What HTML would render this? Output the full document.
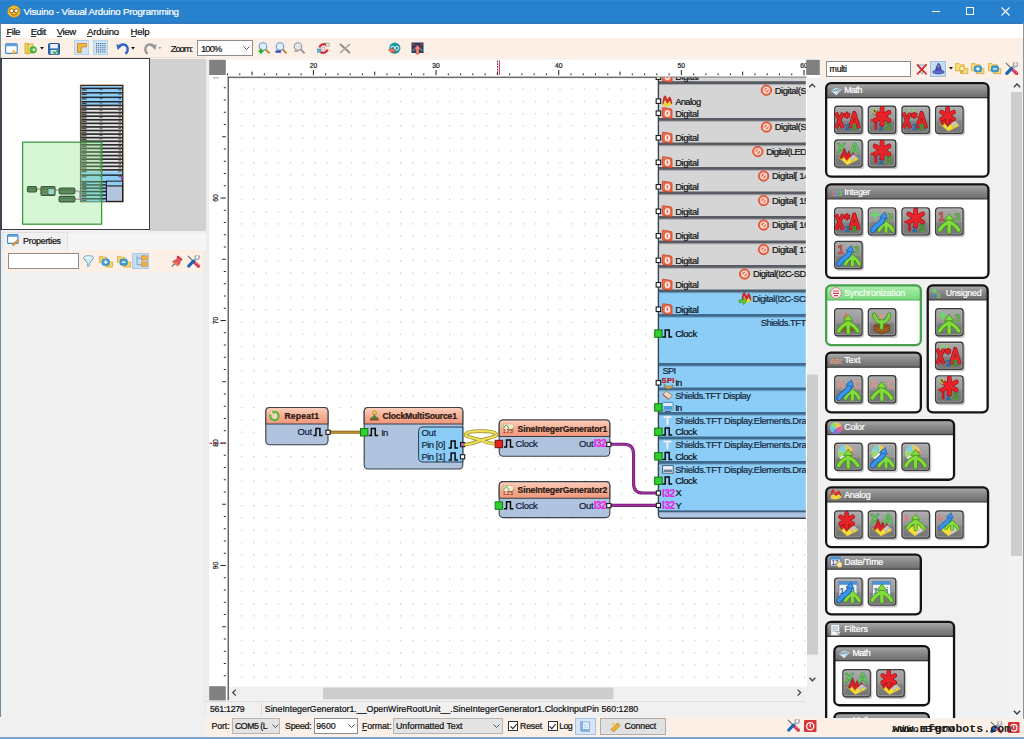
<!DOCTYPE html><html><head><meta charset="utf-8"><title>Visuino</title><style>
html,body{margin:0;padding:0}body{width:1024px;height:739px;position:relative;overflow:hidden;background:#f0f0f0;font-family:"Liberation Sans",sans-serif}
.t{position:absolute;white-space:nowrap;-webkit-text-stroke:0.22px}
</style></head><body>
<div style="position:absolute;left:0.00px;top:0.00px;width:1024.00px;height:24.00px;background:linear-gradient(#2f89d4 0,#2881cd 1.5px,#2881cd 21.5px,#2a74ba 23px,#3a80c4 24px)"></div>
<svg style="position:absolute;left:6.50px;top:5.00px" width="14.00" height="13.00" viewBox="0 0 14 13"><ellipse cx="7" cy="6.5" rx="6.3" ry="5.8" fill="#f6c62a" stroke="#c98d10" stroke-width="0.8"/><circle cx="4.6" cy="5.8" r="2" fill="#fff" stroke="#7a4a10" stroke-width="0.9"/><circle cx="9.4" cy="5.8" r="2" fill="#fff" stroke="#7a4a10" stroke-width="0.9"/><path d="M4 9.3 Q7 11 10 9.3" stroke="#a0401a" stroke-width="0.9" fill="none"/></svg>
<div class="t" style="left:23.40px;top:6.41px;font-size:9.60px;line-height:11.52px;letter-spacing:-0.162px;color:#fff;">Visuino - Visual Arduino Programming</div>
<div style="position:absolute;left:932.00px;top:11.30px;width:8.00px;height:1.00px;background:#fff"></div>
<div style="position:absolute;left:966.00px;top:7.00px;width:7.50px;height:7.50px;border:1px solid #fff;box-sizing:border-box"></div>
<svg style="position:absolute;left:1001.00px;top:6.50px" width="9.00" height="9.00" viewBox="0 0 9 9"><path d="M0.5 0.5 L8.5 8.5 M8.5 0.5 L0.5 8.5" stroke="#fff" stroke-width="1.1"/></svg>
<div style="position:absolute;left:0.00px;top:24.00px;width:1024.00px;height:14.00px;background:#fff"></div>
<div class="t" style="left:6.40px;top:25.71px;font-size:9.60px;line-height:11.52px;letter-spacing:-0.492px;color:#111;">File</div>
<div style="position:absolute;left:6.40px;top:36.20px;width:4.69px;height:0.80px;background:#333"></div>
<div class="t" style="left:30.70px;top:25.71px;font-size:9.60px;line-height:11.52px;letter-spacing:-0.336px;color:#111;">Edit</div>
<div style="position:absolute;left:30.70px;top:36.20px;width:5.12px;height:0.80px;background:#333"></div>
<div class="t" style="left:56.80px;top:25.71px;font-size:9.60px;line-height:11.52px;letter-spacing:-0.409px;color:#111;">View</div>
<div style="position:absolute;left:56.80px;top:36.20px;width:5.12px;height:0.80px;background:#333"></div>
<div class="t" style="left:86.90px;top:25.71px;font-size:9.60px;line-height:11.52px;letter-spacing:-0.127px;color:#111;">Arduino</div>
<div style="position:absolute;left:86.90px;top:36.20px;width:5.12px;height:0.80px;background:#333"></div>
<div class="t" style="left:130.50px;top:25.71px;font-size:9.60px;line-height:11.52px;letter-spacing:-0.211px;color:#111;">Help</div>
<div style="position:absolute;left:130.50px;top:36.20px;width:5.55px;height:0.80px;background:#333"></div>
<div style="position:absolute;left:0.00px;top:38.00px;width:1024.00px;height:40.50px;background:#fbefe6"></div>
<div style="position:absolute;left:0.00px;top:57.30px;width:206.00px;height:1.20px;background:#e9e2dc"></div>
<div style="position:absolute;left:0.00px;top:58.50px;width:206.00px;height:20.00px;background:#f0f0f0"></div>
<div style="position:absolute;left:206.00px;top:59.40px;width:614.00px;height:20.00px;background:#f0f0f0"></div>
<svg style="position:absolute;left:5.00px;top:42.60px" width="13.00" height="12.00" viewBox="0 0 13 12"><rect x="0.6" y="0.8" width="11.6" height="9.6" rx="1" fill="#fff" stroke="#3f86c6" stroke-width="1.1"/><rect x="0.6" y="0.8" width="11.6" height="2.4" fill="#5aa3df"/><path d="M8 7 l3 3 l-3 1z" fill="#f1c24c" stroke="#d19b1f" stroke-width="0.6"/></svg>
<svg style="position:absolute;left:24.00px;top:42.20px" width="14.00" height="13.00" viewBox="0 0 14 13"><path d="M1 1.5 h4 l1 1.5 v8.5 h-5z" fill="#f3d15a" stroke="#c9a227" stroke-width="0.8"/><path d="M4 3 l5 -1.5 v9 l-5 1.5z" fill="#f6dc7a" stroke="#c9a227" stroke-width="0.7"/><circle cx="9.2" cy="7.8" r="3.6" fill="#3fae3a"/><path d="M7.4 7.8 h3.2 M9.4 6.2 l1.6 1.6 l-1.6 1.6" stroke="#d8f6c8" stroke-width="1.1" fill="none"/></svg>
<svg style="position:absolute;left:39.50px;top:47.00px" width="4.00" height="3.00" viewBox="0 0 4 3"><path d="M0 0 h4 l-2 2.6z" fill="#111"/></svg>
<svg style="position:absolute;left:47.50px;top:42.60px" width="12.00" height="12.00" viewBox="0 0 12 12"><rect x="0.5" y="0.5" width="11" height="11" rx="1" fill="#2f6fb6" stroke="#1f4f8c" stroke-width="0.9"/><rect x="2.2" y="1" width="7.6" height="4.4" fill="#e9f1fb"/><rect x="2.6" y="7" width="6.8" height="4.2" fill="#d6e4f3"/><path d="M5 8.6 l1.8 1.8 l3.6 -3.8" stroke="#35b43a" stroke-width="1.5" fill="none"/></svg>
<div style="position:absolute;left:73.70px;top:39.80px;width:15.60px;height:15.60px;background:#cfe4f7;border:1px solid #b2d2ee;box-sizing:border-box"></div>
<svg style="position:absolute;left:76.00px;top:42.20px" width="12.00" height="12.00" viewBox="0 0 12 12"><path d="M1.5 1.5 h9 v3.4 h-5.4 v5.6 h-3.6z" fill="#f3b64b" stroke="#cf8a1c" stroke-width="0.9"/></svg>
<div style="position:absolute;left:92.70px;top:39.80px;width:15.80px;height:15.60px;background:#cfe4f7;border:1px solid #b2d2ee;box-sizing:border-box"></div>
<svg style="position:absolute;left:95.20px;top:42.20px" width="11.00" height="11.00" viewBox="0 0 11 11"><rect x="1.0" y="1.0" width="1.1" height="1.1" fill="#3c5a8a"/><rect x="1.0" y="3.1" width="1.1" height="1.1" fill="#3c5a8a"/><rect x="1.0" y="5.2" width="1.1" height="1.1" fill="#3c5a8a"/><rect x="1.0" y="7.3" width="1.1" height="1.1" fill="#3c5a8a"/><rect x="1.0" y="9.4" width="1.1" height="1.1" fill="#3c5a8a"/><rect x="3.1" y="1.0" width="1.1" height="1.1" fill="#3c5a8a"/><rect x="3.1" y="3.1" width="1.1" height="1.1" fill="#3c5a8a"/><rect x="3.1" y="5.2" width="1.1" height="1.1" fill="#3c5a8a"/><rect x="3.1" y="7.3" width="1.1" height="1.1" fill="#3c5a8a"/><rect x="3.1" y="9.4" width="1.1" height="1.1" fill="#3c5a8a"/><rect x="5.2" y="1.0" width="1.1" height="1.1" fill="#3c5a8a"/><rect x="5.2" y="3.1" width="1.1" height="1.1" fill="#3c5a8a"/><rect x="5.2" y="5.2" width="1.1" height="1.1" fill="#3c5a8a"/><rect x="5.2" y="7.3" width="1.1" height="1.1" fill="#3c5a8a"/><rect x="5.2" y="9.4" width="1.1" height="1.1" fill="#3c5a8a"/><rect x="7.3" y="1.0" width="1.1" height="1.1" fill="#3c5a8a"/><rect x="7.3" y="3.1" width="1.1" height="1.1" fill="#3c5a8a"/><rect x="7.3" y="5.2" width="1.1" height="1.1" fill="#3c5a8a"/><rect x="7.3" y="7.3" width="1.1" height="1.1" fill="#3c5a8a"/><rect x="7.3" y="9.4" width="1.1" height="1.1" fill="#3c5a8a"/><rect x="9.4" y="1.0" width="1.1" height="1.1" fill="#3c5a8a"/><rect x="9.4" y="3.1" width="1.1" height="1.1" fill="#3c5a8a"/><rect x="9.4" y="5.2" width="1.1" height="1.1" fill="#3c5a8a"/><rect x="9.4" y="7.3" width="1.1" height="1.1" fill="#3c5a8a"/><rect x="9.4" y="9.4" width="1.1" height="1.1" fill="#3c5a8a"/></svg>
<svg style="position:absolute;left:116.00px;top:42.20px" width="14.00" height="13.00" viewBox="0 0 14 13"><path d="M2.2 5.8 C4 1.5 10.5 1.2 11.6 6.2 C12.1 8.6 11 10.6 9.3 11.8" stroke="#2f66c8" stroke-width="2.3" fill="none"/><path d="M0.3 2.3 l5.6 1.6 l-4.2 4.1z" fill="#2f66c8"/></svg>
<svg style="position:absolute;left:131.20px;top:47.00px" width="4.00" height="3.00" viewBox="0 0 4 3"><path d="M0 0 h4 l-2 2.6z" fill="#111"/></svg>
<svg style="position:absolute;left:142.50px;top:42.20px" width="14.00" height="13.00" viewBox="0 0 14 13"><path d="M11.8 5.8 C10 1.5 3.5 1.2 2.4 6.2 C1.9 8.6 3 10.6 4.7 11.8" stroke="#9a9a9a" stroke-width="2.3" fill="none"/><path d="M13.7 2.3 l-5.6 1.6 l4.2 4.1z" fill="#9a9a9a"/></svg>
<svg style="position:absolute;left:157.70px;top:47.30px" width="4.00" height="3.00" viewBox="0 0 4 3"><path d="M0 0 h3.6 l-1.8 2.3z" fill="#a8a8a8"/></svg>
<div class="t" style="left:170.80px;top:43.13px;font-size:9.40px;line-height:11.28px;letter-spacing:-1.087px;color:#111;">Zoom:</div>
<div style="position:absolute;left:197.30px;top:40.00px;width:55.30px;height:16.00px;background:#fff;border:1px solid #8c8c8c;box-sizing:border-box"></div>
<div class="t" style="left:201.00px;top:43.33px;font-size:9.40px;line-height:11.28px;letter-spacing:-0.885px;color:#111;">100%</div>
<svg style="position:absolute;left:243.00px;top:46.00px" width="7.00" height="4.00" viewBox="0 0 7 4"><path d="M0.5 0.5 l3 3 l3 -3" stroke="#444" stroke-width="0.9" fill="none"/></svg>
<svg style="position:absolute;left:257.80px;top:42.20px" width="13.00" height="13.00" viewBox="0 0 13 13"><circle cx="5" cy="4.6" r="3.8" fill="#dff0ff" stroke="#6a9ccc" stroke-width="1.1"/><path d="M7.6 7.4 l4 4" stroke="#b68a3a" stroke-width="2"/><path d="M0.5 9.2 h5 M3 6.7 v5" stroke="#2fae2f" stroke-width="2"/></svg>
<svg style="position:absolute;left:274.80px;top:42.20px" width="13.00" height="13.00" viewBox="0 0 13 13"><circle cx="5" cy="4.6" r="3.8" fill="#dff0ff" stroke="#6a9ccc" stroke-width="1.1"/><path d="M7.6 7.4 l4 4" stroke="#b68a3a" stroke-width="2"/><path d="M0.5 9.6 h5.4" stroke="#2a3fb8" stroke-width="2.2"/></svg>
<svg style="position:absolute;left:292.60px;top:42.20px" width="13.00" height="13.00" viewBox="0 0 13 13"><circle cx="5" cy="4.6" r="3.8" fill="#e4e4e4" stroke="#999" stroke-width="1.1"/><path d="M7.6 7.4 l4 4" stroke="#999" stroke-width="2"/><path d="M0.8 10 l2.4 -2.8 l2.4 2.8z" fill="#aaa"/></svg>
<svg style="position:absolute;left:317.00px;top:42.20px" width="13.00" height="13.00" viewBox="0 0 13 13"><path d="M2.5 5.5 C3 2.5 7 1.2 9.5 3.2" stroke="#d2283c" stroke-width="2.2" fill="none"/><path d="M10.5 7.5 C10 10.5 6 11.8 3.5 9.8" stroke="#d2283c" stroke-width="2.2" fill="none"/><rect x="0.6" y="7" width="3.2" height="3.2" fill="#6ab6dc" stroke="#3d86ac" stroke-width="0.6"/><rect x="9" y="1" width="3.2" height="3.2" fill="#d8e8d0" stroke="#8aa080" stroke-width="0.6"/><circle cx="6.5" cy="6.5" r="1.5" fill="#fff" stroke="#c8384a" stroke-width="0.5"/></svg>
<svg style="position:absolute;left:339.00px;top:43.20px" width="12.00" height="11.00" viewBox="0 0 12 11"><path d="M1 1 L11 10" stroke="#8e8e8e" stroke-width="2"/><path d="M11 1 L1 10" stroke="#a5a5a5" stroke-width="1.6"/></svg>
<svg style="position:absolute;left:388.00px;top:42.20px" width="13.00" height="13.00" viewBox="0 0 13 13"><circle cx="6.8" cy="6.2" r="5.6" fill="#1e98a4"/><circle cx="4.8" cy="6.2" r="1.9" fill="none" stroke="#fff" stroke-width="0.9"/><circle cx="8.8" cy="6.2" r="1.9" fill="none" stroke="#fff" stroke-width="0.9"/><path d="M0.4 8 l3.6 -1.6 v1 h2.8 v2.6 h-2.8 v1z" fill="#ef7a6a" stroke="#c23b2c" stroke-width="0.6"/></svg>
<svg style="position:absolute;left:410.70px;top:42.20px" width="13.00" height="13.00" viewBox="0 0 13 13"><rect x="0.5" y="0.5" width="12" height="10.5" fill="#26405e"/><rect x="1.6" y="1.6" width="2" height="2" fill="#c33"/><rect x="9.4" y="1.6" width="2" height="2" fill="#c33"/><rect x="1.6" y="7" width="2" height="2" fill="#39a"/><rect x="9.4" y="7" width="2" height="2" fill="#39a"/><path d="M6.5 3 l3.6 4 h-2.1 v5 h-3 v-5 h-2.1z" fill="#f08a7e" stroke="#c8382c" stroke-width="0.6"/></svg>
<div style="position:absolute;left:0.00px;top:58.50px;width:209.00px;height:660.00px;background:#f0f0f0"></div>
<div style="position:absolute;left:150.00px;top:58.50px;width:55.50px;height:172.00px;background:#d1d1d1"></div>
<div style="position:absolute;left:1.00px;top:58.30px;width:148.80px;height:171.80px;background:#fff;border:1px solid #3c3c44;box-sizing:border-box"></div>
<svg style="position:absolute;left:0;top:0" width="160" height="232" viewBox="0 0 160 232"><rect x="80.6" y="85.2" width="42.4" height="116.4" fill="#e2e2e2" stroke="#b07a4a" stroke-width="1.4"/><rect x="81" y="85.6" width="41.6" height="116" fill="#e6e6e6" stroke="#1c1c1c" stroke-width="1"/><rect x="81.5" y="86" width="40.6" height="19.2" fill="#8fcdf7"/><rect x="81.5" y="171.5" width="40.6" height="30" fill="#8fcdf7"/><rect x="81.5" y="87.60" width="40.6" height="1.50" fill="#161616" opacity="0.9"/><rect x="82" y="89.40" width="4.6" height="1.2" fill="#111" opacity="0.75"/><rect x="99.5" y="89.10" width="3" height="1" fill="#222" opacity="0.6"/><rect x="118.4" y="89.30" width="2.6" height="1.1" fill="#222" opacity="0.6"/><rect x="81.5" y="92.07" width="40.6" height="1.50" fill="#161616" opacity="0.9"/><rect x="82" y="93.87" width="4.6" height="1.2" fill="#111" opacity="0.75"/><rect x="99.5" y="93.57" width="3" height="1" fill="#222" opacity="0.6"/><rect x="118.4" y="93.77" width="2.6" height="1.1" fill="#222" opacity="0.6"/><rect x="81.5" y="96.54" width="40.6" height="1.50" fill="#161616" opacity="0.9"/><rect x="82" y="98.34" width="4.6" height="1.2" fill="#111" opacity="0.75"/><rect x="99.5" y="98.04" width="3" height="1" fill="#222" opacity="0.6"/><rect x="118.4" y="98.24" width="2.6" height="1.1" fill="#222" opacity="0.6"/><rect x="81.5" y="101.01" width="40.6" height="1.50" fill="#161616" opacity="0.9"/><rect x="82" y="102.81" width="4.6" height="1.2" fill="#111" opacity="0.75"/><rect x="99.5" y="102.51" width="3" height="1" fill="#222" opacity="0.6"/><rect x="118.4" y="102.71" width="2.6" height="1.1" fill="#222" opacity="0.6"/><rect x="81.5" y="104.60" width="40.6" height="1.70" fill="#161616" opacity="0.9"/><rect x="82" y="106.60" width="4.6" height="1.2" fill="#111" opacity="0.75"/><rect x="99.5" y="106.30" width="3" height="1" fill="#222" opacity="0.6"/><rect x="118.4" y="106.50" width="2.6" height="1.1" fill="#222" opacity="0.6"/><rect x="81.5" y="108.18" width="40.6" height="1.70" fill="#161616" opacity="0.9"/><rect x="82" y="110.18" width="4.6" height="1.2" fill="#111" opacity="0.75"/><rect x="99.5" y="109.88" width="3" height="1" fill="#222" opacity="0.6"/><rect x="118.4" y="110.08" width="2.6" height="1.1" fill="#222" opacity="0.6"/><rect x="81.5" y="111.76" width="40.6" height="1.70" fill="#161616" opacity="0.9"/><rect x="82" y="113.76" width="4.6" height="1.2" fill="#111" opacity="0.75"/><rect x="99.5" y="113.46" width="3" height="1" fill="#222" opacity="0.6"/><rect x="118.4" y="113.66" width="2.6" height="1.1" fill="#222" opacity="0.6"/><rect x="81.5" y="115.34" width="40.6" height="1.70" fill="#161616" opacity="0.9"/><rect x="82" y="117.34" width="4.6" height="1.2" fill="#111" opacity="0.75"/><rect x="99.5" y="117.04" width="3" height="1" fill="#222" opacity="0.6"/><rect x="118.4" y="117.24" width="2.6" height="1.1" fill="#222" opacity="0.6"/><rect x="81.5" y="118.92" width="40.6" height="1.70" fill="#161616" opacity="0.9"/><rect x="82" y="120.92" width="4.6" height="1.2" fill="#111" opacity="0.75"/><rect x="99.5" y="120.62" width="3" height="1" fill="#222" opacity="0.6"/><rect x="118.4" y="120.82" width="2.6" height="1.1" fill="#222" opacity="0.6"/><rect x="81.5" y="122.50" width="40.6" height="1.70" fill="#161616" opacity="0.9"/><rect x="82" y="124.50" width="4.6" height="1.2" fill="#111" opacity="0.75"/><rect x="99.5" y="124.20" width="3" height="1" fill="#222" opacity="0.6"/><rect x="118.4" y="124.40" width="2.6" height="1.1" fill="#222" opacity="0.6"/><rect x="81.5" y="126.08" width="40.6" height="1.70" fill="#161616" opacity="0.9"/><rect x="82" y="128.08" width="4.6" height="1.2" fill="#111" opacity="0.75"/><rect x="99.5" y="127.78" width="3" height="1" fill="#222" opacity="0.6"/><rect x="118.4" y="127.98" width="2.6" height="1.1" fill="#222" opacity="0.6"/><rect x="81.5" y="129.66" width="40.6" height="1.70" fill="#161616" opacity="0.9"/><rect x="82" y="131.66" width="4.6" height="1.2" fill="#111" opacity="0.75"/><rect x="99.5" y="131.36" width="3" height="1" fill="#222" opacity="0.6"/><rect x="118.4" y="131.56" width="2.6" height="1.1" fill="#222" opacity="0.6"/><rect x="81.5" y="133.24" width="40.6" height="1.70" fill="#161616" opacity="0.9"/><rect x="82" y="135.24" width="4.6" height="1.2" fill="#111" opacity="0.75"/><rect x="99.5" y="134.94" width="3" height="1" fill="#222" opacity="0.6"/><rect x="118.4" y="135.14" width="2.6" height="1.1" fill="#222" opacity="0.6"/><rect x="81.5" y="136.82" width="40.6" height="1.70" fill="#161616" opacity="0.9"/><rect x="82" y="138.82" width="4.6" height="1.2" fill="#111" opacity="0.75"/><rect x="99.5" y="138.52" width="3" height="1" fill="#222" opacity="0.6"/><rect x="118.4" y="138.72" width="2.6" height="1.1" fill="#222" opacity="0.6"/><rect x="81.5" y="140.40" width="40.6" height="1.70" fill="#161616" opacity="0.9"/><rect x="82" y="142.40" width="4.6" height="1.2" fill="#111" opacity="0.75"/><rect x="99.5" y="142.10" width="3" height="1" fill="#222" opacity="0.6"/><rect x="118.4" y="142.30" width="2.6" height="1.1" fill="#222" opacity="0.6"/><rect x="81.5" y="143.98" width="40.6" height="1.70" fill="#161616" opacity="0.9"/><rect x="82" y="145.98" width="4.6" height="1.2" fill="#111" opacity="0.75"/><rect x="99.5" y="145.68" width="3" height="1" fill="#222" opacity="0.6"/><rect x="118.4" y="145.88" width="2.6" height="1.1" fill="#222" opacity="0.6"/><rect x="81.5" y="147.56" width="40.6" height="1.70" fill="#161616" opacity="0.9"/><rect x="82" y="149.56" width="4.6" height="1.2" fill="#111" opacity="0.75"/><rect x="99.5" y="149.26" width="3" height="1" fill="#222" opacity="0.6"/><rect x="118.4" y="149.46" width="2.6" height="1.1" fill="#222" opacity="0.6"/><rect x="81.5" y="151.14" width="40.6" height="1.70" fill="#161616" opacity="0.9"/><rect x="82" y="153.14" width="4.6" height="1.2" fill="#111" opacity="0.75"/><rect x="99.5" y="152.84" width="3" height="1" fill="#222" opacity="0.6"/><rect x="118.4" y="153.04" width="2.6" height="1.1" fill="#222" opacity="0.6"/><rect x="81.5" y="154.72" width="40.6" height="1.70" fill="#161616" opacity="0.9"/><rect x="82" y="156.72" width="4.6" height="1.2" fill="#111" opacity="0.75"/><rect x="99.5" y="156.42" width="3" height="1" fill="#222" opacity="0.6"/><rect x="118.4" y="156.62" width="2.6" height="1.1" fill="#222" opacity="0.6"/><rect x="81.5" y="158.30" width="40.6" height="1.70" fill="#161616" opacity="0.9"/><rect x="82" y="160.30" width="4.6" height="1.2" fill="#111" opacity="0.75"/><rect x="99.5" y="160.00" width="3" height="1" fill="#222" opacity="0.6"/><rect x="118.4" y="160.20" width="2.6" height="1.1" fill="#222" opacity="0.6"/><rect x="81.5" y="161.88" width="40.6" height="1.70" fill="#161616" opacity="0.9"/><rect x="82" y="163.88" width="4.6" height="1.2" fill="#111" opacity="0.75"/><rect x="99.5" y="163.58" width="3" height="1" fill="#222" opacity="0.6"/><rect x="118.4" y="163.78" width="2.6" height="1.1" fill="#222" opacity="0.6"/><rect x="81.5" y="165.46" width="40.6" height="1.70" fill="#161616" opacity="0.9"/><rect x="82" y="167.46" width="4.6" height="1.2" fill="#111" opacity="0.75"/><rect x="99.5" y="167.16" width="3" height="1" fill="#222" opacity="0.6"/><rect x="118.4" y="167.36" width="2.6" height="1.1" fill="#222" opacity="0.6"/><rect x="81.5" y="169.04" width="40.6" height="1.70" fill="#161616" opacity="0.9"/><rect x="82" y="171.04" width="4.6" height="1.2" fill="#111" opacity="0.75"/><rect x="99.5" y="170.74" width="3" height="1" fill="#222" opacity="0.6"/><rect x="118.4" y="170.94" width="2.6" height="1.1" fill="#222" opacity="0.6"/><rect x="81.5" y="174.40" width="40.6" height="1.50" fill="#161616" opacity="0.9"/><rect x="82" y="176.20" width="4.6" height="1.2" fill="#111" opacity="0.75"/><rect x="99.5" y="175.90" width="3" height="1" fill="#222" opacity="0.6"/><rect x="118.4" y="176.10" width="2.6" height="1.1" fill="#222" opacity="0.6"/><rect x="81.5" y="181.00" width="40.6" height="1.50" fill="#161616" opacity="0.9"/><rect x="82" y="182.80" width="4.6" height="1.2" fill="#111" opacity="0.75"/><rect x="99.5" y="182.50" width="3" height="1" fill="#222" opacity="0.6"/><rect x="118.4" y="182.70" width="2.6" height="1.1" fill="#222" opacity="0.6"/><rect x="81.5" y="184.20" width="40.6" height="1.50" fill="#161616" opacity="0.9"/><rect x="82" y="186.00" width="4.6" height="1.2" fill="#111" opacity="0.75"/><rect x="99.5" y="185.70" width="3" height="1" fill="#222" opacity="0.6"/><rect x="118.4" y="185.90" width="2.6" height="1.1" fill="#222" opacity="0.6"/><rect x="81.5" y="187.40" width="40.6" height="1.50" fill="#161616" opacity="0.9"/><rect x="82" y="189.20" width="4.6" height="1.2" fill="#111" opacity="0.75"/><rect x="99.5" y="188.90" width="3" height="1" fill="#222" opacity="0.6"/><rect x="118.4" y="189.10" width="2.6" height="1.1" fill="#222" opacity="0.6"/><rect x="81.5" y="190.80" width="40.6" height="1.50" fill="#161616" opacity="0.9"/><rect x="82" y="192.60" width="4.6" height="1.2" fill="#111" opacity="0.75"/><rect x="99.5" y="192.30" width="3" height="1" fill="#222" opacity="0.6"/><rect x="118.4" y="192.50" width="2.6" height="1.1" fill="#222" opacity="0.6"/><rect x="81.5" y="194.40" width="40.6" height="1.50" fill="#161616" opacity="0.9"/><rect x="82" y="196.20" width="4.6" height="1.2" fill="#111" opacity="0.75"/><rect x="99.5" y="195.90" width="3" height="1" fill="#222" opacity="0.6"/><rect x="118.4" y="196.10" width="2.6" height="1.1" fill="#222" opacity="0.6"/><rect x="81.5" y="198.00" width="40.6" height="1.50" fill="#161616" opacity="0.9"/><rect x="82" y="199.80" width="4.6" height="1.2" fill="#111" opacity="0.75"/><rect x="99.5" y="199.50" width="3" height="1" fill="#222" opacity="0.6"/><rect x="118.4" y="199.70" width="2.6" height="1.1" fill="#222" opacity="0.6"/><rect x="106.4" y="181.2" width="16.2" height="20.2" fill="#b2c4de" stroke="#1a1a1a" stroke-width="1.1"/><rect x="106.9" y="181.8" width="15.2" height="3.6" fill="#8fcdf7"/><rect x="106.4" y="185.4" width="16.2" height="1.1" fill="#1a1a1a"/><rect x="121" y="176" width="1.6" height="4" fill="#a03ab0"/><path d="M36.5 189.2 H41 M55 190 H59 M75 191 h3 q2 0 2 2 v4.5 q0 2 2 2 M75 199.2 H82" stroke="#a83aa8" stroke-width="1" fill="none"/><path d="M36.5 189.2 H41 M55 190 H59" stroke="#c8b040" stroke-width="1" fill="none"/><rect x="27.5" y="186.5" width="9.0" height="5.5" rx="1.2" fill="#4e5e4e" stroke="#0c140c" stroke-width="1.2"/><rect x="29.0" y="187.7" width="6.0" height="1.6" fill="#3a463a"/><rect x="41.0" y="186.5" width="14.0" height="9.0" rx="1.2" fill="#4e5e4e" stroke="#0c140c" stroke-width="1.2"/><rect x="42.5" y="187.7" width="11.0" height="1.6" fill="#3a463a"/><rect x="48" y="188.8" width="6.5" height="5.5" fill="#9fd0e8" stroke="#1f2a1f" stroke-width="0.6"/><rect x="59.2" y="188.2" width="15.6" height="5.6" rx="1.2" fill="#4e5e4e" stroke="#0c140c" stroke-width="1.2"/><rect x="60.7" y="189.4" width="12.6" height="1.6" fill="#3a463a"/><rect x="59.2" y="196.3" width="15.6" height="5.6" rx="1.2" fill="#4e5e4e" stroke="#0c140c" stroke-width="1.2"/><rect x="60.7" y="197.5" width="12.6" height="1.6" fill="#3a463a"/><rect x="22.6" y="142.2" width="79" height="82" fill="#86e486" fill-opacity="0.34" stroke="#3f9a3f" stroke-width="1.3"/></svg>
<div style="position:absolute;left:2.00px;top:231.50px;width:65.50px;height:18.50px;background:#f0f0f0;border:1px solid #e1e1e1;border-bottom:none;box-sizing:border-box"></div>
<div style="position:absolute;left:67.50px;top:233.50px;width:138.00px;height:16.00px;background:#f5f5f5"></div>
<svg style="position:absolute;left:7.00px;top:234.40px" width="12.00" height="12.00" viewBox="0 0 12 12"><rect x="0.6" y="0.6" width="10.4" height="8.8" rx="1" fill="#fff" stroke="#3f86c6" stroke-width="1.1"/><rect x="0.6" y="0.6" width="10.4" height="2.2" fill="#5aa3df"/><path d="M5 10.6 l5.4 -5 l1.2 1.3 l-5.2 4.9z" fill="#e8a23a" stroke="#9a6a1a" stroke-width="0.5"/></svg>
<div class="t" style="left:23.10px;top:236.12px;font-size:8.90px;line-height:10.68px;letter-spacing:-0.276px;color:#111;">Properties</div>
<div style="position:absolute;left:4.50px;top:249.80px;width:199.50px;height:22.40px;background:#fbefe6"></div>
<div style="position:absolute;left:204.00px;top:249.80px;width:1.00px;height:470.00px;background:#e6e6e6"></div>
<div style="position:absolute;left:8.40px;top:253.30px;width:71.00px;height:16.20px;background:#fff;border:1px solid #8f8f8f;box-sizing:border-box"></div>
<svg style="position:absolute;left:83.00px;top:255.00px" width="11.00" height="13.00" viewBox="0 0 11 13"><ellipse cx="5.5" cy="2.8" rx="4.8" ry="2.1" fill="#eaf4fb" stroke="#6aa0c4" stroke-width="0.9"/><path d="M0.9 3.4 L4.6 8.6 V11.8 L6.6 10.6 V8.6 L10.1 3.4" fill="#cfe6f4" stroke="#6aa0c4" stroke-width="0.9"/></svg>
<svg style="position:absolute;left:99.00px;top:255.00px" width="14.00" height="13.00" viewBox="0 0 14 13"><path d="M0.6 1.4 h3.2 l0.9 1 h3 v5.2 h-7.1z" fill="#f6d46a" stroke="#d0a52a" stroke-width="0.7"/><path d="M6.6 6 h3 l0.9 1 h3 v5 h-6.9z" fill="#f6d46a" stroke="#d0a52a" stroke-width="0.7"/><rect x="3.2" y="4.2" width="7" height="6" rx="1.4" fill="#3a9fdc" stroke="#1f78b4" stroke-width="0.7"/><path d="M4.8 7.2 h3.8 M6.7 5.3 v3.8" stroke="#fff" stroke-width="1.2"/></svg>
<svg style="position:absolute;left:117.00px;top:255.00px" width="14.00" height="13.00" viewBox="0 0 14 13"><path d="M0.6 1.4 h3.2 l0.9 1 h3 v5.2 h-7.1z" fill="#f6d46a" stroke="#d0a52a" stroke-width="0.7"/><path d="M6.6 6 h3 l0.9 1 h3 v5 h-6.9z" fill="#f6d46a" stroke="#d0a52a" stroke-width="0.7"/><rect x="3.2" y="4.2" width="7" height="6" rx="1.4" fill="#3a9fdc" stroke="#1f78b4" stroke-width="0.7"/><path d="M4.8 7.2 h3.8" stroke="#fff" stroke-width="1.2"/></svg>
<div style="position:absolute;left:132.30px;top:252.70px;width:16.70px;height:16.00px;background:#c9ddf0;border:1px solid #a9c8e8;box-sizing:border-box"></div>
<svg style="position:absolute;left:134.50px;top:254.60px" width="13.00" height="12.00" viewBox="0 0 13 12"><path d="M2 0.5 v9.2 h4 M2 3.2 h4" stroke="#7aa6cc" stroke-width="1" fill="none"/><rect x="6.6" y="0.8" width="5.6" height="4.2" fill="#f3b04a" stroke="#c8862a" stroke-width="0.6"/><rect x="6.6" y="7" width="5.6" height="4.2" fill="#f3b04a" stroke="#c8862a" stroke-width="0.6"/></svg>
<svg style="position:absolute;left:170.50px;top:255.00px" width="12.00" height="13.00" viewBox="0 0 12 13"><path d="M4.4 8 L0.8 11.6" stroke="#6a6a6a" stroke-width="1.1"/><path d="M6.4 1.2 l4.6 3.6 l-1.6 1.2 l-0.6 3 l-2.4 2 l-5 -4.4 l2.6 -1.6 l1.4 -0.2z" fill="#e05a62" stroke="#c03a44" stroke-width="0.5"/><path d="M5 7.4 l2 1.8 l-1.4 1.4 l-2 -1.8z" fill="#e8962a"/><path d="M6.4 1.2 l4.6 3.6" stroke="#c8303c" stroke-width="1.6"/></svg>
<svg style="position:absolute;left:187.00px;top:254.70px" width="13.00" height="13.00" viewBox="0 0 13 13"><path d="M0.8 0.8 L6.2 6.2" stroke="#6a6a72" stroke-width="1.1"/><path d="M6.4 6.4 L11.4 11.2" stroke="#d8344a" stroke-width="3.2" stroke-linecap="round"/><path d="M7.6 6.6 L11.6 10.4" stroke="#fff" stroke-width="0.9" stroke-dasharray="1 1.1" opacity="0.8"/><circle cx="10.2" cy="2.4" r="2.1" fill="none" stroke="#a4acb6" stroke-width="1.5"/><path d="M10.4 0 v2.4" stroke="#fbefe6" stroke-width="1.3"/><path d="M8.8 3.8 L6.2 6.4" stroke="#a4acb6" stroke-width="1.8"/><path d="M6.4 6.2 L1.8 11" stroke="#1f62b8" stroke-width="3.2" stroke-linecap="round"/></svg>
<div style="position:absolute;left:0.00px;top:23.30px;width:1.00px;height:716.00px;background:#6f8c9e"></div>
<div style="position:absolute;left:0.00px;top:58.30px;width:1.20px;height:172.00px;background:#3a4a5a"></div>
<svg style="position:absolute;left:0;top:0" width="1024" height="739" viewBox="0 0 1024 739" font-family="Liberation Sans, sans-serif"><rect x="209" y="59.6" width="611" height="641" fill="#fff"/>
<rect x="206" y="58.5" width="3" height="642" fill="#ececec"/>
<rect x="227.04" y="73.40" width="1" height="1.80" fill="#222"/>
<rect x="239.31" y="73.40" width="1" height="1.80" fill="#222"/>
<rect x="251.57" y="71.60" width="1" height="3.60" fill="#222"/>
<rect x="263.84" y="73.40" width="1" height="1.80" fill="#222"/>
<rect x="276.10" y="73.40" width="1" height="1.80" fill="#222"/>
<rect x="288.37" y="73.40" width="1" height="1.80" fill="#222"/>
<rect x="300.63" y="73.40" width="1" height="1.80" fill="#222"/>
<rect x="312.90" y="70.00" width="1" height="5.20" fill="#222"/>
<text x="313.40" y="67.51" font-size="6.70" fill="#222" stroke="#222" stroke-width="0.22" text-anchor="middle" >20</text>
<rect x="325.16" y="73.40" width="1" height="1.80" fill="#222"/>
<rect x="337.43" y="73.40" width="1" height="1.80" fill="#222"/>
<rect x="349.69" y="73.40" width="1" height="1.80" fill="#222"/>
<rect x="361.96" y="73.40" width="1" height="1.80" fill="#222"/>
<rect x="374.22" y="71.60" width="1" height="3.60" fill="#222"/>
<rect x="386.49" y="73.40" width="1" height="1.80" fill="#222"/>
<rect x="398.75" y="73.40" width="1" height="1.80" fill="#222"/>
<rect x="411.02" y="73.40" width="1" height="1.80" fill="#222"/>
<rect x="423.28" y="73.40" width="1" height="1.80" fill="#222"/>
<rect x="435.55" y="70.00" width="1" height="5.20" fill="#222"/>
<text x="436.05" y="67.51" font-size="6.70" fill="#222" stroke="#222" stroke-width="0.22" text-anchor="middle" >30</text>
<rect x="447.81" y="73.40" width="1" height="1.80" fill="#222"/>
<rect x="460.08" y="73.40" width="1" height="1.80" fill="#222"/>
<rect x="472.34" y="73.40" width="1" height="1.80" fill="#222"/>
<rect x="484.61" y="73.40" width="1" height="1.80" fill="#222"/>
<rect x="496.88" y="71.60" width="1" height="3.60" fill="#222"/>
<rect x="509.14" y="73.40" width="1" height="1.80" fill="#222"/>
<rect x="521.40" y="73.40" width="1" height="1.80" fill="#222"/>
<rect x="533.67" y="73.40" width="1" height="1.80" fill="#222"/>
<rect x="545.93" y="73.40" width="1" height="1.80" fill="#222"/>
<rect x="558.20" y="70.00" width="1" height="5.20" fill="#222"/>
<text x="558.70" y="67.51" font-size="6.70" fill="#222" stroke="#222" stroke-width="0.22" text-anchor="middle" >40</text>
<rect x="570.46" y="73.40" width="1" height="1.80" fill="#222"/>
<rect x="582.73" y="73.40" width="1" height="1.80" fill="#222"/>
<rect x="595.00" y="73.40" width="1" height="1.80" fill="#222"/>
<rect x="607.26" y="73.40" width="1" height="1.80" fill="#222"/>
<rect x="619.52" y="71.60" width="1" height="3.60" fill="#222"/>
<rect x="631.79" y="73.40" width="1" height="1.80" fill="#222"/>
<rect x="644.06" y="73.40" width="1" height="1.80" fill="#222"/>
<rect x="656.32" y="73.40" width="1" height="1.80" fill="#222"/>
<rect x="668.59" y="73.40" width="1" height="1.80" fill="#222"/>
<rect x="680.85" y="70.00" width="1" height="5.20" fill="#222"/>
<text x="681.35" y="67.51" font-size="6.70" fill="#222" stroke="#222" stroke-width="0.22" text-anchor="middle" >50</text>
<rect x="693.12" y="73.40" width="1" height="1.80" fill="#222"/>
<rect x="705.38" y="73.40" width="1" height="1.80" fill="#222"/>
<rect x="717.64" y="73.40" width="1" height="1.80" fill="#222"/>
<rect x="729.91" y="73.40" width="1" height="1.80" fill="#222"/>
<rect x="742.17" y="71.60" width="1" height="3.60" fill="#222"/>
<rect x="754.44" y="73.40" width="1" height="1.80" fill="#222"/>
<rect x="766.70" y="73.40" width="1" height="1.80" fill="#222"/>
<rect x="778.97" y="73.40" width="1" height="1.80" fill="#222"/>
<rect x="791.24" y="73.40" width="1" height="1.80" fill="#222"/>
<rect x="803.50" y="70.00" width="1" height="5.20" fill="#222"/>
<text x="804.00" y="67.51" font-size="6.70" fill="#222" stroke="#222" stroke-width="0.22" text-anchor="middle" >60</text>
<rect x="223.80" y="87.25" width="2.00" height="1" fill="#222"/>
<rect x="223.80" y="99.50" width="2.00" height="1" fill="#222"/>
<rect x="223.80" y="111.75" width="2.00" height="1" fill="#222"/>
<rect x="223.80" y="124.00" width="2.00" height="1" fill="#222"/>
<rect x="222.20" y="136.25" width="3.60" height="1" fill="#222"/>
<rect x="223.80" y="148.50" width="2.00" height="1" fill="#222"/>
<rect x="223.80" y="160.75" width="2.00" height="1" fill="#222"/>
<rect x="223.80" y="173.00" width="2.00" height="1" fill="#222"/>
<rect x="223.80" y="185.25" width="2.00" height="1" fill="#222"/>
<rect x="220.60" y="197.50" width="5.20" height="1" fill="#222"/>
<g transform="translate(215.6,198.00) rotate(-90)"><text x="0.00" y="2.45" font-size="6.80" fill="#222" stroke="#222" stroke-width="0.22" text-anchor="middle" >60</text></g>
<rect x="223.80" y="209.75" width="2.00" height="1" fill="#222"/>
<rect x="223.80" y="222.00" width="2.00" height="1" fill="#222"/>
<rect x="223.80" y="234.25" width="2.00" height="1" fill="#222"/>
<rect x="223.80" y="246.50" width="2.00" height="1" fill="#222"/>
<rect x="222.20" y="258.75" width="3.60" height="1" fill="#222"/>
<rect x="223.80" y="271.00" width="2.00" height="1" fill="#222"/>
<rect x="223.80" y="283.25" width="2.00" height="1" fill="#222"/>
<rect x="223.80" y="295.50" width="2.00" height="1" fill="#222"/>
<rect x="223.80" y="307.75" width="2.00" height="1" fill="#222"/>
<rect x="220.60" y="320.00" width="5.20" height="1" fill="#222"/>
<g transform="translate(215.6,320.50) rotate(-90)"><text x="0.00" y="2.45" font-size="6.80" fill="#222" stroke="#222" stroke-width="0.22" text-anchor="middle" >70</text></g>
<rect x="223.80" y="332.25" width="2.00" height="1" fill="#222"/>
<rect x="223.80" y="344.50" width="2.00" height="1" fill="#222"/>
<rect x="223.80" y="356.75" width="2.00" height="1" fill="#222"/>
<rect x="223.80" y="369.00" width="2.00" height="1" fill="#222"/>
<rect x="222.20" y="381.25" width="3.60" height="1" fill="#222"/>
<rect x="223.80" y="393.50" width="2.00" height="1" fill="#222"/>
<rect x="223.80" y="405.75" width="2.00" height="1" fill="#222"/>
<rect x="223.80" y="418.00" width="2.00" height="1" fill="#222"/>
<rect x="223.80" y="430.25" width="2.00" height="1" fill="#222"/>
<rect x="220.60" y="442.50" width="5.20" height="1" fill="#222"/>
<g transform="translate(215.6,443.00) rotate(-90)"><text x="0.00" y="2.45" font-size="6.80" fill="#222" stroke="#222" stroke-width="0.22" text-anchor="middle" >80</text></g>
<rect x="223.80" y="454.75" width="2.00" height="1" fill="#222"/>
<rect x="223.80" y="467.00" width="2.00" height="1" fill="#222"/>
<rect x="223.80" y="479.25" width="2.00" height="1" fill="#222"/>
<rect x="223.80" y="491.50" width="2.00" height="1" fill="#222"/>
<rect x="222.20" y="503.75" width="3.60" height="1" fill="#222"/>
<rect x="223.80" y="516.00" width="2.00" height="1" fill="#222"/>
<rect x="223.80" y="528.25" width="2.00" height="1" fill="#222"/>
<rect x="223.80" y="540.50" width="2.00" height="1" fill="#222"/>
<rect x="223.80" y="552.75" width="2.00" height="1" fill="#222"/>
<rect x="220.60" y="565.00" width="5.20" height="1" fill="#222"/>
<g transform="translate(215.6,565.50) rotate(-90)"><text x="0.00" y="2.45" font-size="6.80" fill="#222" stroke="#222" stroke-width="0.22" text-anchor="middle" >90</text></g>
<rect x="223.80" y="577.25" width="2.00" height="1" fill="#222"/>
<rect x="223.80" y="589.50" width="2.00" height="1" fill="#222"/>
<rect x="223.80" y="601.75" width="2.00" height="1" fill="#222"/>
<rect x="223.80" y="614.00" width="2.00" height="1" fill="#222"/>
<rect x="222.20" y="626.25" width="3.60" height="1" fill="#222"/>
<rect x="223.80" y="638.50" width="2.00" height="1" fill="#222"/>
<rect x="223.80" y="650.75" width="2.00" height="1" fill="#222"/>
<rect x="223.80" y="663.00" width="2.00" height="1" fill="#222"/>
<rect x="223.80" y="675.25" width="2.00" height="1" fill="#222"/>
<rect x="209.2" y="59.8" width="16.6" height="15.2" fill="#808080"/>
<rect x="806.2" y="59.8" width="13.6" height="15.2" fill="#808080"/>
<rect x="209.2" y="686.2" width="16.6" height="14.2" fill="#808080"/>
<path d="M213.5 77.6 q1 1.2 2 0 m1 0 q1 1.2 2 0" stroke="#444" stroke-width="0.8" fill="none"/>
<path d="M497.5 60.5 V75" stroke="#3a2a8a" stroke-width="1" stroke-dasharray="1.6 1.2"/><path d="M499.4 60.5 V75" stroke="#d83a3a" stroke-width="1.1"/>
<path d="M209.5 443.2 H226" stroke="#8a1a5a" stroke-width="1.1" stroke-dasharray="2.6 1"/>
<rect x="227.6" y="76.4" width="579" height="610" fill="#fff"/>
<defs><pattern id="dots" x="240.850" y="88.550" width="12.250" height="12.250" patternUnits="userSpaceOnUse"><rect x="0" y="0" width="1.3" height="1.3" fill="#c9c9c9"/></pattern><clipPath id="vp"><rect x="229" y="77.6" width="576.8" height="608.8"/></clipPath></defs>
<rect x="230" y="80" width="576" height="606" fill="url(#dots)"/>
<rect x="227.5" y="76.6" width="1.5" height="623.6" fill="#6a6a6a"/>
<rect x="227.5" y="76.6" width="579" height="1.5" fill="#6a6a6a"/>
<g clip-path="url(#vp)">
<rect x="658.40" y="60" width="160" height="230.9" fill="#d5d5d5"/>
<path d="M658.40 290.9 H820 V518.2 H662.40 Q658.40 518.2 658.40 514.2 z" fill="#8ccdf8"/>
<path d="M658.40 511.4 H820 V518.2 H662.40 Q658.40 518.2 658.40 514.2 z" fill="#adc5e1"/>
<rect x="658.40" y="510.4" width="162" height="1.9" fill="#3f5f7c"/>
<rect x="658.40" y="81.20" width="160" height="2.8" fill="#585c62"/>
<rect x="658.40" y="84.00" width="160" height="1" fill="#585c62" opacity="0.35"/>
<rect x="658.40" y="118.00" width="160" height="2.8" fill="#585c62"/>
<rect x="658.40" y="120.80" width="160" height="1" fill="#585c62" opacity="0.35"/>
<rect x="658.40" y="142.50" width="160" height="2.8" fill="#585c62"/>
<rect x="658.40" y="145.30" width="160" height="1" fill="#585c62" opacity="0.35"/>
<rect x="658.40" y="167.00" width="160" height="2.8" fill="#585c62"/>
<rect x="658.40" y="169.80" width="160" height="1" fill="#585c62" opacity="0.35"/>
<rect x="658.40" y="191.50" width="160" height="2.8" fill="#585c62"/>
<rect x="658.40" y="194.30" width="160" height="1" fill="#585c62" opacity="0.35"/>
<rect x="658.40" y="216.00" width="160" height="2.8" fill="#585c62"/>
<rect x="658.40" y="218.80" width="160" height="1" fill="#585c62" opacity="0.35"/>
<rect x="658.40" y="240.50" width="160" height="2.8" fill="#585c62"/>
<rect x="658.40" y="243.30" width="160" height="1" fill="#585c62" opacity="0.35"/>
<rect x="658.40" y="265.00" width="160" height="2.8" fill="#585c62"/>
<rect x="658.40" y="267.80" width="160" height="1" fill="#585c62" opacity="0.35"/>
<rect x="658.40" y="289.50" width="160" height="2.8" fill="#4a5e70"/>
<rect x="658.40" y="292.30" width="160" height="1" fill="#4a5e70" opacity="0.35"/>
<rect x="658.40" y="314.00" width="160" height="2.8" fill="#3f6a8c"/>
<rect x="658.40" y="316.80" width="160" height="1" fill="#3f6a8c" opacity="0.35"/>
<rect x="658.40" y="363.00" width="160" height="2.8" fill="#3f6a8c"/>
<rect x="658.40" y="365.80" width="160" height="1" fill="#3f6a8c" opacity="0.35"/>
<rect x="658.40" y="387.50" width="160" height="2.8" fill="#3f6a8c"/>
<rect x="658.40" y="390.30" width="160" height="1" fill="#3f6a8c" opacity="0.35"/>
<rect x="658.40" y="412.00" width="160" height="2.8" fill="#3f6a8c"/>
<rect x="658.40" y="414.80" width="160" height="1" fill="#3f6a8c" opacity="0.35"/>
<rect x="658.40" y="436.50" width="160" height="2.8" fill="#3f6a8c"/>
<rect x="658.40" y="439.30" width="160" height="1" fill="#3f6a8c" opacity="0.35"/>
<rect x="658.40" y="461.00" width="160" height="2.8" fill="#3f6a8c"/>
<rect x="658.40" y="463.80" width="160" height="1" fill="#3f6a8c" opacity="0.35"/>
<path d="M658.40 60 V514.2 Q658.40 518.2 662.40 518.2 H820" fill="none" stroke="#3c4650" stroke-width="1.4"/>
<rect x="656.15" y="74.95" width="4.50" height="4.50" fill="#fff" stroke="#1a1a1a" stroke-width="1.1"/>
<g transform="translate(662.40,76.60)"><path d="M0.4 -5.4 L8.4 -4.2 Q9.6 -4 9.6 -2.8 V4.4 Q9.6 5.8 8.2 5.6 L1.2 4.6 Q0 4.4 0 3.2 V-4.6z" fill="#ee6a4c" stroke="#c63c22" stroke-width="0.8"/><ellipse cx="5" cy="0.4" rx="2.3" ry="3" fill="#fbd9cf" stroke="#fff" stroke-width="0.9"/><path d="M5 -1.4 v3.2" stroke="#e0563a" stroke-width="1"/></g>
<text x="675.20" y="79.98" font-size="9.40" letter-spacing="-0.403" fill="#111" stroke="#111" stroke-width="0.22" text-anchor="start" >Digital</text>
<circle cx="766.40" cy="90.20" r="5.2" fill="#ee6a4c" stroke="#d4472c" stroke-width="0.8"/><circle cx="766.40" cy="90.20" r="2.9" fill="none" stroke="#fde3da" stroke-width="1.2"/><path d="M764.40 92.20 L768.40 88.20" stroke="#fde3da" stroke-width="1.3"/>
<text x="774.80" y="93.58" font-size="9.40" letter-spacing="-0.447" fill="#111" stroke="#111" stroke-width="0.22" text-anchor="start" >Digital(SPI-MISO)</text>
<rect x="656.15" y="98.95" width="4.50" height="4.50" fill="#fff" stroke="#1a1a1a" stroke-width="1.1"/>
<g transform="translate(662.40,101.00)"><path d="M0.4 4.6 Q5 7 9.6 3.6 L9 1 L0.6 1z" fill="#f2d23c"/><path d="M0.4 3.2 C0.6 -2 1.6 -5.4 2.8 -5.2 C3.8 -5 4 -1.6 5 -1.4 C6 -1.4 6.2 -4.2 7.2 -4 C8.6 -3.6 9.2 0 9.4 3 C8.2 1.4 7.6 -0.8 7 -0.6 C6.2 -0.4 6 2 5 2 C4 2 3.6 -1.6 2.8 -1.6 C2 -1.6 1.4 1 0.4 3.2z" fill="#e02a1e" stroke="#a81208" stroke-width="0.5"/></g>
<text x="675.20" y="104.58" font-size="9.40" letter-spacing="-0.645" fill="#111" stroke="#111" stroke-width="0.22" text-anchor="start" >Analog</text>
<rect x="656.15" y="110.95" width="4.50" height="4.50" fill="#fff" stroke="#1a1a1a" stroke-width="1.1"/>
<g transform="translate(662.40,113.00)"><path d="M0.4 -5.4 L8.4 -4.2 Q9.6 -4 9.6 -2.8 V4.4 Q9.6 5.8 8.2 5.6 L1.2 4.6 Q0 4.4 0 3.2 V-4.6z" fill="#ee6a4c" stroke="#c63c22" stroke-width="0.8"/><ellipse cx="5" cy="0.4" rx="2.3" ry="3" fill="#fbd9cf" stroke="#fff" stroke-width="0.9"/><path d="M5 -1.4 v3.2" stroke="#e0563a" stroke-width="1"/></g>
<text x="675.20" y="116.58" font-size="9.40" letter-spacing="-0.403" fill="#111" stroke="#111" stroke-width="0.22" text-anchor="start" >Digital</text>
<circle cx="766.40" cy="127.00" r="5.2" fill="#ee6a4c" stroke="#d4472c" stroke-width="0.8"/><circle cx="766.40" cy="127.00" r="2.9" fill="none" stroke="#fde3da" stroke-width="1.2"/><path d="M764.40 129.00 L768.40 125.00" stroke="#fde3da" stroke-width="1.3"/>
<text x="774.80" y="130.38" font-size="9.40" letter-spacing="-0.447" fill="#111" stroke="#111" stroke-width="0.22" text-anchor="start" >Digital(SPI-MOSI)</text>
<rect x="656.15" y="135.55" width="4.50" height="4.50" fill="#fff" stroke="#1a1a1a" stroke-width="1.1"/>
<g transform="translate(662.40,137.60)"><path d="M0.4 -5.4 L8.4 -4.2 Q9.6 -4 9.6 -2.8 V4.4 Q9.6 5.8 8.2 5.6 L1.2 4.6 Q0 4.4 0 3.2 V-4.6z" fill="#ee6a4c" stroke="#c63c22" stroke-width="0.8"/><ellipse cx="5" cy="0.4" rx="2.3" ry="3" fill="#fbd9cf" stroke="#fff" stroke-width="0.9"/><path d="M5 -1.4 v3.2" stroke="#e0563a" stroke-width="1"/></g>
<text x="675.20" y="141.18" font-size="9.40" letter-spacing="-0.403" fill="#111" stroke="#111" stroke-width="0.22" text-anchor="start" >Digital</text>
<circle cx="757.80" cy="151.50" r="5.2" fill="#ee6a4c" stroke="#d4472c" stroke-width="0.8"/><circle cx="757.80" cy="151.50" r="2.9" fill="none" stroke="#fde3da" stroke-width="1.2"/><path d="M755.80 153.50 L759.80 149.50" stroke="#fde3da" stroke-width="1.3"/>
<text x="766.20" y="154.88" font-size="9.40" letter-spacing="-0.685" fill="#111" stroke="#111" stroke-width="0.22" text-anchor="start" >Digital(LED)(SPI-SCK)</text>
<rect x="656.15" y="160.05" width="4.50" height="4.50" fill="#fff" stroke="#1a1a1a" stroke-width="1.1"/>
<g transform="translate(662.40,162.10)"><path d="M0.4 -5.4 L8.4 -4.2 Q9.6 -4 9.6 -2.8 V4.4 Q9.6 5.8 8.2 5.6 L1.2 4.6 Q0 4.4 0 3.2 V-4.6z" fill="#ee6a4c" stroke="#c63c22" stroke-width="0.8"/><ellipse cx="5" cy="0.4" rx="2.3" ry="3" fill="#fbd9cf" stroke="#fff" stroke-width="0.9"/><path d="M5 -1.4 v3.2" stroke="#e0563a" stroke-width="1"/></g>
<text x="675.20" y="165.68" font-size="9.40" letter-spacing="-0.403" fill="#111" stroke="#111" stroke-width="0.22" text-anchor="start" >Digital</text>
<circle cx="763.60" cy="176.00" r="5.2" fill="#ee6a4c" stroke="#d4472c" stroke-width="0.8"/><circle cx="763.60" cy="176.00" r="2.9" fill="none" stroke="#fde3da" stroke-width="1.2"/><path d="M761.60 178.00 L765.60 174.00" stroke="#fde3da" stroke-width="1.3"/>
<text x="772.00" y="179.38" font-size="9.40" letter-spacing="-0.457" fill="#111" stroke="#111" stroke-width="0.22" text-anchor="start" >Digital[ 14 ]</text>
<rect x="656.15" y="184.55" width="4.50" height="4.50" fill="#fff" stroke="#1a1a1a" stroke-width="1.1"/>
<g transform="translate(662.40,186.60)"><path d="M0.4 -5.4 L8.4 -4.2 Q9.6 -4 9.6 -2.8 V4.4 Q9.6 5.8 8.2 5.6 L1.2 4.6 Q0 4.4 0 3.2 V-4.6z" fill="#ee6a4c" stroke="#c63c22" stroke-width="0.8"/><ellipse cx="5" cy="0.4" rx="2.3" ry="3" fill="#fbd9cf" stroke="#fff" stroke-width="0.9"/><path d="M5 -1.4 v3.2" stroke="#e0563a" stroke-width="1"/></g>
<text x="675.20" y="190.18" font-size="9.40" letter-spacing="-0.403" fill="#111" stroke="#111" stroke-width="0.22" text-anchor="start" >Digital</text>
<circle cx="763.60" cy="200.50" r="5.2" fill="#ee6a4c" stroke="#d4472c" stroke-width="0.8"/><circle cx="763.60" cy="200.50" r="2.9" fill="none" stroke="#fde3da" stroke-width="1.2"/><path d="M761.60 202.50 L765.60 198.50" stroke="#fde3da" stroke-width="1.3"/>
<text x="772.00" y="203.88" font-size="9.40" letter-spacing="-0.457" fill="#111" stroke="#111" stroke-width="0.22" text-anchor="start" >Digital[ 15 ]</text>
<rect x="656.15" y="209.05" width="4.50" height="4.50" fill="#fff" stroke="#1a1a1a" stroke-width="1.1"/>
<g transform="translate(662.40,211.10)"><path d="M0.4 -5.4 L8.4 -4.2 Q9.6 -4 9.6 -2.8 V4.4 Q9.6 5.8 8.2 5.6 L1.2 4.6 Q0 4.4 0 3.2 V-4.6z" fill="#ee6a4c" stroke="#c63c22" stroke-width="0.8"/><ellipse cx="5" cy="0.4" rx="2.3" ry="3" fill="#fbd9cf" stroke="#fff" stroke-width="0.9"/><path d="M5 -1.4 v3.2" stroke="#e0563a" stroke-width="1"/></g>
<text x="675.20" y="214.68" font-size="9.40" letter-spacing="-0.403" fill="#111" stroke="#111" stroke-width="0.22" text-anchor="start" >Digital</text>
<circle cx="763.60" cy="225.00" r="5.2" fill="#ee6a4c" stroke="#d4472c" stroke-width="0.8"/><circle cx="763.60" cy="225.00" r="2.9" fill="none" stroke="#fde3da" stroke-width="1.2"/><path d="M761.60 227.00 L765.60 223.00" stroke="#fde3da" stroke-width="1.3"/>
<text x="772.00" y="228.38" font-size="9.40" letter-spacing="-0.457" fill="#111" stroke="#111" stroke-width="0.22" text-anchor="start" >Digital[ 16 ]</text>
<rect x="656.15" y="233.55" width="4.50" height="4.50" fill="#fff" stroke="#1a1a1a" stroke-width="1.1"/>
<g transform="translate(662.40,235.60)"><path d="M0.4 -5.4 L8.4 -4.2 Q9.6 -4 9.6 -2.8 V4.4 Q9.6 5.8 8.2 5.6 L1.2 4.6 Q0 4.4 0 3.2 V-4.6z" fill="#ee6a4c" stroke="#c63c22" stroke-width="0.8"/><ellipse cx="5" cy="0.4" rx="2.3" ry="3" fill="#fbd9cf" stroke="#fff" stroke-width="0.9"/><path d="M5 -1.4 v3.2" stroke="#e0563a" stroke-width="1"/></g>
<text x="675.20" y="239.18" font-size="9.40" letter-spacing="-0.403" fill="#111" stroke="#111" stroke-width="0.22" text-anchor="start" >Digital</text>
<circle cx="763.60" cy="249.50" r="5.2" fill="#ee6a4c" stroke="#d4472c" stroke-width="0.8"/><circle cx="763.60" cy="249.50" r="2.9" fill="none" stroke="#fde3da" stroke-width="1.2"/><path d="M761.60 251.50 L765.60 247.50" stroke="#fde3da" stroke-width="1.3"/>
<text x="772.00" y="252.88" font-size="9.40" letter-spacing="-0.457" fill="#111" stroke="#111" stroke-width="0.22" text-anchor="start" >Digital[ 17 ]</text>
<rect x="656.15" y="258.05" width="4.50" height="4.50" fill="#fff" stroke="#1a1a1a" stroke-width="1.1"/>
<g transform="translate(662.40,260.10)"><path d="M0.4 -5.4 L8.4 -4.2 Q9.6 -4 9.6 -2.8 V4.4 Q9.6 5.8 8.2 5.6 L1.2 4.6 Q0 4.4 0 3.2 V-4.6z" fill="#ee6a4c" stroke="#c63c22" stroke-width="0.8"/><ellipse cx="5" cy="0.4" rx="2.3" ry="3" fill="#fbd9cf" stroke="#fff" stroke-width="0.9"/><path d="M5 -1.4 v3.2" stroke="#e0563a" stroke-width="1"/></g>
<text x="675.20" y="263.68" font-size="9.40" letter-spacing="-0.403" fill="#111" stroke="#111" stroke-width="0.22" text-anchor="start" >Digital</text>
<circle cx="744.60" cy="274.00" r="5.2" fill="#ee6a4c" stroke="#d4472c" stroke-width="0.8"/><circle cx="744.60" cy="274.00" r="2.9" fill="none" stroke="#fde3da" stroke-width="1.2"/><path d="M742.60 276.00 L746.60 272.00" stroke="#fde3da" stroke-width="1.3"/>
<text x="753.00" y="277.38" font-size="9.40" letter-spacing="-0.505" fill="#111" stroke="#111" stroke-width="0.22" text-anchor="start" >Digital(I2C-SDA)</text>
<rect x="656.15" y="282.55" width="4.50" height="4.50" fill="#fff" stroke="#1a1a1a" stroke-width="1.1"/>
<g transform="translate(662.40,284.60)"><path d="M0.4 -5.4 L8.4 -4.2 Q9.6 -4 9.6 -2.8 V4.4 Q9.6 5.8 8.2 5.6 L1.2 4.6 Q0 4.4 0 3.2 V-4.6z" fill="#ee6a4c" stroke="#c63c22" stroke-width="0.8"/><ellipse cx="5" cy="0.4" rx="2.3" ry="3" fill="#fbd9cf" stroke="#fff" stroke-width="0.9"/><path d="M5 -1.4 v3.2" stroke="#e0563a" stroke-width="1"/></g>
<text x="675.20" y="288.18" font-size="9.40" letter-spacing="-0.403" fill="#111" stroke="#111" stroke-width="0.22" text-anchor="start" >Digital</text>
<g transform="translate(741.50,297.50)"><path d="M0.4 4.6 Q5 7 9.6 3.6 L9 1 L0.6 1z" fill="#f2d23c"/><path d="M0.4 3.2 C0.6 -2 1.6 -5.4 2.8 -5.2 C3.8 -5 4 -1.6 5 -1.4 C6 -1.4 6.2 -4.2 7.2 -4 C8.6 -3.6 9.2 0 9.4 3 C8.2 1.4 7.6 -0.8 7 -0.6 C6.2 -0.4 6 2 5 2 C4 2 3.6 -1.6 2.8 -1.6 C2 -1.6 1.4 1 0.4 3.2z" fill="#e02a1e" stroke="#a81208" stroke-width="0.5"/></g>
<path d="M739.2 299.90 h4.2 v-2 l3.6 3.4 l-3.6 3.4 v-2 h-4.2z" fill="#5cc83a" stroke="#2a8a1a" stroke-width="0.5"/>
<text x="752.40" y="301.68" font-size="9.40" letter-spacing="-0.505" fill="#16283a" stroke="#16283a" stroke-width="0.22" text-anchor="start" >Digital(I2C-SCL)</text>
<rect x="656.15" y="307.05" width="4.50" height="4.50" fill="#fff" stroke="#1a1a1a" stroke-width="1.1"/>
<g transform="translate(662.40,309.10)"><path d="M0.4 -5.4 L8.4 -4.2 Q9.6 -4 9.6 -2.8 V4.4 Q9.6 5.8 8.2 5.6 L1.2 4.6 Q0 4.4 0 3.2 V-4.6z" fill="#ee6a4c" stroke="#c63c22" stroke-width="0.8"/><ellipse cx="5" cy="0.4" rx="2.3" ry="3" fill="#fbd9cf" stroke="#fff" stroke-width="0.9"/><path d="M5 -1.4 v3.2" stroke="#e0563a" stroke-width="1"/></g>
<text x="675.20" y="312.68" font-size="9.40" letter-spacing="-0.403" fill="#0c1016" stroke="#0c1016" stroke-width="0.22" text-anchor="start" >Digital</text>
<text x="760.80" y="325.68" font-size="9.40" letter-spacing="-0.515" fill="#16283a" stroke="#16283a" stroke-width="0.22" text-anchor="start" >Shields.TFT</text>
<rect x="654.70" y="329.90" width="7.40" height="7.40" fill="#2fd02f" stroke="#0f7a0f" stroke-width="1"/>
<path d="M662.60 336.90 h2.59 v-7.00 h4.03 v7.00 h2.98" fill="none" stroke="#0a0a0a" stroke-width="1.50"/>
<text x="675.20" y="336.98" font-size="9.40" letter-spacing="-0.381" fill="#0c1016" stroke="#0c1016" stroke-width="0.22" text-anchor="start" >Clock</text>
<text x="662.60" y="374.38" font-size="9.40" letter-spacing="-0.851" fill="#16283a" stroke="#16283a" stroke-width="0.22" text-anchor="start" >SPI</text>
<rect x="656.15" y="380.55" width="4.50" height="4.50" fill="#fff" stroke="#1a1a1a" stroke-width="1.1"/>
<path d="M664 384 q4 5 9 1 l-0.6 2.6 q-4 3 -8 -0.6z" fill="#d8a64a" stroke="#7a5a2a" stroke-width="0.5"/>
<text x="661.60" y="382.94" font-size="7.60" letter-spacing="0.250" font-weight="bold" fill="#b01818" stroke="#b01818" stroke-width="0.22" text-anchor="start" >SPI</text>
<text x="675.20" y="386.28" font-size="9.40" letter-spacing="-0.719" fill="#0c1016" stroke="#0c1016" stroke-width="0.22" text-anchor="start" >In</text>
<path d="M662.6 394.4 l3.8 -3.4 l6 4.6 l-3.8 3.6z" fill="#e8d8c8" stroke="#9a6a4a" stroke-width="0.8"/><path d="M662.6 394.4 l6 4.8" stroke="#c05a3a" stroke-width="1.2"/>
<text x="675.20" y="399.18" font-size="9.40" letter-spacing="-0.438" fill="#16283a" stroke="#16283a" stroke-width="0.22" text-anchor="start" >Shields.TFT Display</text>
<rect x="654.70" y="403.70" width="7.40" height="7.40" fill="#2fd02f" stroke="#0f7a0f" stroke-width="1"/>
<rect x="662.6" y="402.4" width="10.4" height="7.4" rx="0.8" fill="#dff0fc" stroke="#3f7fb4" stroke-width="0.9"/><rect x="663.6" y="406" width="8.4" height="3" fill="#4aa0dc"/><path d="M665 411.6 h5.6" stroke="#3a5a7a" stroke-width="1.2"/>
<text x="675.20" y="410.78" font-size="9.40" letter-spacing="-0.719" fill="#0c1016" stroke="#0c1016" stroke-width="0.22" text-anchor="start" >In</text>
<path d="M663.4 416.00 h8.2 v2 h-3 v7 h-2.2 v-7 h-3z" fill="#eef6fc" stroke="#a8cce4" stroke-width="0.5"/>
<text x="675.20" y="423.78" font-size="9.40" letter-spacing="-0.349" fill="#16283a" stroke="#16283a" stroke-width="0.22" text-anchor="start" >Shields.TFT Display.Elements.Draw Text1</text>
<rect x="654.70" y="428.10" width="7.40" height="7.40" fill="#2fd02f" stroke="#0f7a0f" stroke-width="1"/>
<path d="M662.60 435.10 h2.59 v-7.00 h4.03 v7.00 h2.98" fill="none" stroke="#0a0a0a" stroke-width="1.50"/>
<text x="675.20" y="435.18" font-size="9.40" letter-spacing="-0.381" fill="#0c1016" stroke="#0c1016" stroke-width="0.22" text-anchor="start" >Clock</text>
<path d="M663.4 440.50 h8.2 v2 h-3 v7 h-2.2 v-7 h-3z" fill="#eef6fc" stroke="#a8cce4" stroke-width="0.5"/>
<text x="675.20" y="448.28" font-size="9.40" letter-spacing="-0.349" fill="#16283a" stroke="#16283a" stroke-width="0.22" text-anchor="start" >Shields.TFT Display.Elements.Draw Text1</text>
<rect x="654.70" y="452.60" width="7.40" height="7.40" fill="#2fd02f" stroke="#0f7a0f" stroke-width="1"/>
<path d="M662.60 459.60 h2.59 v-7.00 h4.03 v7.00 h2.98" fill="none" stroke="#0a0a0a" stroke-width="1.50"/>
<text x="675.20" y="459.68" font-size="9.40" letter-spacing="-0.381" fill="#0c1016" stroke="#0c1016" stroke-width="0.22" text-anchor="start" >Clock</text>
<rect x="662.6" y="465.60" width="10.6" height="7.6" fill="#e8eef4" stroke="#44586c" stroke-width="0.9"/><rect x="663.6" y="469.60" width="8.6" height="2.4" fill="#6a8098"/>
<text x="675.20" y="472.78" font-size="9.40" letter-spacing="-0.349" fill="#16283a" stroke="#16283a" stroke-width="0.22" text-anchor="start" >Shields.TFT Display.Elements.Draw Text1</text>
<rect x="654.70" y="477.10" width="7.40" height="7.40" fill="#2fd02f" stroke="#0f7a0f" stroke-width="1"/>
<path d="M662.60 484.10 h2.59 v-7.00 h4.03 v7.00 h2.98" fill="none" stroke="#0a0a0a" stroke-width="1.50"/>
<text x="675.20" y="484.18" font-size="9.40" letter-spacing="-0.381" fill="#0c1016" stroke="#0c1016" stroke-width="0.22" text-anchor="start" >Clock</text>
<text x="662.00" y="496.60" font-size="10.00" letter-spacing="-0.367" font-weight="bold" fill="#e428e4" stroke="#e428e4" stroke-width="0.22" text-anchor="start" >I32</text>
<text x="675.40" y="496.38" font-size="9.40" fill="#0c1016" stroke="#0c1016" stroke-width="0.22" text-anchor="start" >X</text>
<text x="662.00" y="508.80" font-size="10.00" letter-spacing="-0.367" font-weight="bold" fill="#e428e4" stroke="#e428e4" stroke-width="0.22" text-anchor="start" >I32</text>
<text x="675.40" y="508.58" font-size="9.40" fill="#0c1016" stroke="#0c1016" stroke-width="0.22" text-anchor="start" >Y</text>
<defs><linearGradient id="hdr" x1="0" y1="0" x2="0" y2="1"><stop offset="0" stop-color="#fbd0be"/><stop offset="0.55" stop-color="#f6ad92"/><stop offset="1" stop-color="#f0967a"/></linearGradient></defs>
<path d="M330 432.2 H360.5" stroke="#7a5a10" stroke-width="3" fill="none"/><path d="M330 432.2 H360.5" stroke="#c79a2a" stroke-width="1.4" fill="none"/>
<path d="M611 444.3 H624 Q633.6 444.3 633.6 454 V483.4 Q633.6 493 643 493 H656" stroke="#6c1c6c" stroke-width="3.1" fill="none"/><path d="M611 444.3 H624 Q633.6 444.3 633.6 454 V483.4 Q633.6 493 643 493 H656" stroke="#a033a0" stroke-width="1.7" fill="none"/>
<path d="M611 505.4 H656" stroke="#6c1c6c" stroke-width="3.1" fill="none"/><path d="M611 505.4 H656" stroke="#a033a0" stroke-width="1.7" fill="none"/>
<rect x="265.80" y="407.50" width="62.20" height="37.20" rx="4" fill="#afc3df" stroke="#3a4048" stroke-width="1.1"/>
<path d="M265.80 424.00 V411.50 Q265.80 407.50 269.80 407.50 H324.00 Q328.00 407.50 328.00 411.50 V424.00 z" fill="url(#hdr)" stroke="#3a4048" stroke-width="1.1"/>
<circle cx="274.6" cy="416" r="4.9" fill="#f4e4d0" opacity="0.7"/><path d="M270.6 414.4 a4.2 4.2 0 1 0 4 -2.6" stroke="#5cb83a" stroke-width="2.2" fill="none"/><path d="M272 410.4 l3.6 1.4 l-2.6 2.6z" fill="#5cb83a"/>
<text x="284.40" y="419.15" font-size="8.60" letter-spacing="0.220" font-weight="bold" fill="#2a1a14" stroke="#2a1a14" stroke-width="0.22" text-anchor="start" >Repeat1</text>
<text x="297.40" y="435.38" font-size="9.40" letter-spacing="-0.250" fill="#14203a" stroke="#14203a" stroke-width="0.22" text-anchor="start" >Out</text>
<path d="M313.40 435.50 h2.54 v-7.00 h3.95 v7.00 h2.91" fill="none" stroke="#0a0a0a" stroke-width="1.50"/>
<rect x="325.90" y="430.20" width="4.20" height="4.20" fill="#fff" stroke="#1a1a1a" stroke-width="1.1"/>
<rect x="364.20" y="407.50" width="98.60" height="61.50" rx="4" fill="#afc3df" stroke="#3a4048" stroke-width="1.1"/>
<path d="M364.20 424.00 V411.50 Q364.20 407.50 368.20 407.50 H458.80 Q462.80 407.50 462.80 411.50 V424.00 z" fill="url(#hdr)" stroke="#3a4048" stroke-width="1.1"/>
<path d="M369.6 420.6 h9.6 l-1 -3 h-7.6z" fill="#7a5a2a"/><path d="M371.4 417.8 q3 -4 6 0z" fill="#3a9a3a"/><circle cx="374.6" cy="412.8" r="2" fill="#e8c84a" stroke="#8a6a1a" stroke-width="0.5"/><path d="M374.4 414.6 v3" stroke="#2a7a2a" stroke-width="1"/>
<text x="382.60" y="419.15" font-size="8.60" letter-spacing="-0.189" font-weight="bold" fill="#2a1a14" stroke="#2a1a14" stroke-width="0.22" text-anchor="start" >ClockMultiSource1</text>
<path d="M462.8 427 H423 Q418.6 427 418.6 431.4 V457.6 Q418.6 462 423 462 H462.8 z" fill="#8ccdf8" stroke="#2a3a4a" stroke-width="1"/>
<rect x="360.50" y="428.60" width="7.40" height="7.40" fill="#2fd02f" stroke="#0f7a0f" stroke-width="1"/>
<path d="M368.80 435.50 h2.54 v-7.00 h3.95 v7.00 h2.91" fill="none" stroke="#0a0a0a" stroke-width="1.50"/>
<text x="381.20" y="435.58" font-size="9.40" letter-spacing="-0.719" fill="#14203a" stroke="#14203a" stroke-width="0.22" text-anchor="start" >In</text>
<text x="421.40" y="436.18" font-size="9.40" letter-spacing="-0.250" fill="#16283a" stroke="#16283a" stroke-width="0.22" text-anchor="start" >Out</text>
<text x="421.40" y="447.98" font-size="9.40" letter-spacing="-0.450" fill="#16283a" stroke="#16283a" stroke-width="0.22" text-anchor="start" >Pin [0]</text>
<text x="421.40" y="460.18" font-size="9.40" letter-spacing="-0.450" fill="#16283a" stroke="#16283a" stroke-width="0.22" text-anchor="start" >Pin [1]</text>
<path d="M448.60 447.90 h2.54 v-7.00 h3.95 v7.00 h2.91" fill="none" stroke="#0a0a0a" stroke-width="1.50"/>
<path d="M448.60 460.10 h2.54 v-7.00 h3.95 v7.00 h2.91" fill="none" stroke="#0a0a0a" stroke-width="1.50"/>
<rect x="460.50" y="442.50" width="4.20" height="4.20" fill="#b06ab0" stroke="#1a1a1a" stroke-width="1.1"/>
<rect x="460.50" y="454.70" width="4.20" height="4.20" fill="#fff" stroke="#1a1a1a" stroke-width="1.1"/>
<path d="M464.4 444.8 C472 444 476 442 481 440.2 C489 437.4 498 436.8 496.2 434 C493.6 430.2 468.4 430.2 465.8 434 C464 436.8 473 437.4 481 440.2 C486 442 490 443.6 495 443.8" stroke="#9a8c2a" stroke-width="3.6" fill="none"/><path d="M464.4 444.8 C472 444 476 442 481 440.2 C489 437.4 498 436.8 496.2 434 C493.6 430.2 468.4 430.2 465.8 434 C464 436.8 473 437.4 481 440.2 C486 442 490 443.6 495 443.8" stroke="#eee05a" stroke-width="2.1" fill="none"/>
<rect x="499.20" y="420.00" width="110.60" height="36.20" rx="4" fill="#afc3df" stroke="#3a4048" stroke-width="1.1"/>
<path d="M499.20 436.50 V424.00 Q499.20 420.00 503.20 420.00 H605.80 Q609.80 420.00 609.80 424.00 V436.50 z" fill="url(#hdr)" stroke="#3a4048" stroke-width="1.1"/>
<rect x="503.40" y="424.00" width="10" height="9" fill="#f4ead0" stroke="#b8a070" stroke-width="0.5"/><path d="M503.80 428.00 q2.4 -6 4.8 0 t4.8 0" stroke="#4aa03a" stroke-width="0.9" fill="none"/><text x="503.00" y="433.42" font-size="5.60" letter-spacing="0.419" font-weight="bold" fill="#c03a2a" stroke="#c03a2a" stroke-width="0.22" text-anchor="start" >123</text>
<text x="517.60" y="431.65" font-size="8.60" letter-spacing="-0.148" font-weight="bold" fill="#2a1a14" stroke="#2a1a14" stroke-width="0.22" text-anchor="start" >SineIntegerGenerator1</text>
<rect x="495.20" y="440.30" width="7.40" height="7.40" fill="#e0281e" stroke="#7a1008" stroke-width="1"/>
<path d="M504.00 447.10 h2.54 v-7.00 h3.95 v7.00 h2.91" fill="none" stroke="#0a0a0a" stroke-width="1.50"/>
<text x="515.60" y="447.18" font-size="9.40" letter-spacing="-0.341" fill="#14203a" stroke="#14203a" stroke-width="0.22" text-anchor="start" >Clock</text>
<text x="579.00" y="447.18" font-size="9.40" letter-spacing="-0.250" fill="#14203a" stroke="#14203a" stroke-width="0.22" text-anchor="start" >Out</text>
<text x="593.80" y="447.40" font-size="10.00" letter-spacing="-0.567" font-weight="bold" fill="#e428e4" stroke="#e428e4" stroke-width="0.22" text-anchor="start" >I32</text>
<rect x="606.70" y="442.30" width="4.20" height="4.20" fill="#fff" stroke="#1a1a1a" stroke-width="1.1"/>
<rect x="499.20" y="481.60" width="110.60" height="36.00" rx="4" fill="#afc3df" stroke="#3a4048" stroke-width="1.1"/>
<path d="M499.20 498.20 V485.60 Q499.20 481.60 503.20 481.60 H605.80 Q609.80 481.60 609.80 485.60 V498.20 z" fill="url(#hdr)" stroke="#3a4048" stroke-width="1.1"/>
<rect x="503.40" y="485.60" width="10" height="9" fill="#f4ead0" stroke="#b8a070" stroke-width="0.5"/><path d="M503.80 489.60 q2.4 -6 4.8 0 t4.8 0" stroke="#4aa03a" stroke-width="0.9" fill="none"/><text x="503.00" y="495.02" font-size="5.60" letter-spacing="0.419" font-weight="bold" fill="#c03a2a" stroke="#c03a2a" stroke-width="0.22" text-anchor="start" >123</text>
<text x="517.60" y="493.30" font-size="8.60" letter-spacing="-0.148" font-weight="bold" fill="#2a1a14" stroke="#2a1a14" stroke-width="0.22" text-anchor="start" >SineIntegerGenerator2</text>
<rect x="495.20" y="501.90" width="7.40" height="7.40" fill="#2fd02f" stroke="#0f7a0f" stroke-width="1"/>
<path d="M504.00 508.70 h2.54 v-7.00 h3.95 v7.00 h2.91" fill="none" stroke="#0a0a0a" stroke-width="1.50"/>
<text x="515.60" y="508.58" font-size="9.40" letter-spacing="-0.341" fill="#14203a" stroke="#14203a" stroke-width="0.22" text-anchor="start" >Clock</text>
<text x="579.00" y="508.58" font-size="9.40" letter-spacing="-0.250" fill="#14203a" stroke="#14203a" stroke-width="0.22" text-anchor="start" >Out</text>
<text x="593.80" y="509.00" font-size="10.00" letter-spacing="-0.567" font-weight="bold" fill="#e428e4" stroke="#e428e4" stroke-width="0.22" text-anchor="start" >I32</text>
<rect x="606.70" y="503.50" width="4.20" height="4.20" fill="#fff" stroke="#1a1a1a" stroke-width="1.1"/>
<rect x="656.30" y="490.90" width="4.20" height="4.20" fill="#fff" stroke="#1a1a1a" stroke-width="1.1"/>
<rect x="656.30" y="503.30" width="4.20" height="4.20" fill="#fff" stroke="#1a1a1a" stroke-width="1.1"/>
</g>
<rect x="806" y="77.6" width="14" height="609" fill="#f0f0f0"/>
<rect x="806" y="77.6" width="1" height="609" fill="#fff"/>
<rect x="807" y="374.6" width="11" height="280" fill="#cdcdcd"/>
<path d="M809.2 87.2 l3 -3 l3 3" stroke="#404040" stroke-width="1.3" fill="none"/>
<path d="M809.4 677.8 l3 3 l3 -3" stroke="#404040" stroke-width="1.3" fill="none"/>
<rect x="229" y="686.6" width="591" height="14" fill="#f0f0f0"/>
<rect x="323" y="687.6" width="290.5" height="11.6" fill="#cdcdcd"/>
<path d="M235.8 689.6 l-3 3 l3 3" stroke="#404040" stroke-width="1.3" fill="none"/>
<path d="M797.6 689.6 l3 3 l-3 3" stroke="#404040" stroke-width="1.3" fill="none"/></svg>
<div style="position:absolute;left:820.00px;top:78.50px;width:204.00px;height:640.00px;background:#f0f0f0"></div>
<div style="position:absolute;left:825.60px;top:61.30px;width:85.00px;height:15.60px;background:#fff;border:1px solid #8a8a8a;box-sizing:border-box"></div>
<div class="t" style="left:829.60px;top:64.22px;font-size:8.90px;line-height:10.68px;letter-spacing:-0.358px;color:#111;">multi</div>
<svg style="position:absolute;left:915.50px;top:62.50px" width="12.00" height="13.00" viewBox="0 0 12 13"><path d="M1 2 h9 l-3.4 4.4 v4.6 l-2.2 -1.4 v-3.2z" fill="#dcecf8" stroke="#6a98c0" stroke-width="0.8"/><path d="M1 1.4 L10.6 11.4 M10.6 1.4 L1 11.4" stroke="#d42a2a" stroke-width="1.6"/></svg>
<div style="position:absolute;left:929.60px;top:60.60px;width:16.60px;height:16.40px;background:#c9ddf0;border:1px solid #9cc0e4;box-sizing:border-box"></div>
<svg style="position:absolute;left:931.60px;top:62.00px" width="13.00" height="13.00" viewBox="0 0 13 13"><path d="M6.4 1 Q9 3 9.4 8.6 L3.4 9.4 Q4 4 6.4 1z" fill="#4a5ac0" stroke="#2a3488" stroke-width="0.6"/><ellipse cx="6.5" cy="10" rx="5.8" ry="1.9" fill="#5a6ad0" stroke="#2a3488" stroke-width="0.6"/><path d="M6.2 3.4 l0.6 1.4" stroke="#f0d84a" stroke-width="1"/></svg>
<svg style="position:absolute;left:948.60px;top:67.20px" width="4.00" height="3.00" viewBox="0 0 4 3"><path d="M0 0 h4 l-2 2.6z" fill="#111"/></svg>
<svg style="position:absolute;left:954.60px;top:62.00px" width="14.00" height="13.00" viewBox="0 0 14 13"><path d="M0.6 1.6 h3.6 l1 1.2 h4 v6 h-8.6z" fill="#f8dc7a" stroke="#d0a52a" stroke-width="0.7"/><path d="M5.4 5.4 h3 l0.9 1 h3.6 v5.2 h-7.5z" fill="#f8dc7a" stroke="#d0a52a" stroke-width="0.7"/><circle cx="7" cy="6.6" r="2.6" fill="#fbe9a0" stroke="#c8a020" stroke-width="0.7"/><path d="M7 8.6 v2.4" stroke="#b89020" stroke-width="1.2"/></svg>
<svg style="position:absolute;left:971.40px;top:62.00px" width="14.00" height="13.00" viewBox="0 0 14 13"><path d="M0.6 1.6 h3.6 l1 1.2 h4 v6 h-8.6z" fill="#f8dc7a" stroke="#d0a52a" stroke-width="0.7"/><path d="M5.4 5.4 h3 l0.9 1 h3.6 v5.2 h-7.5z" fill="#f8dc7a" stroke="#d0a52a" stroke-width="0.7"/><rect x="3.4" y="4" width="7" height="5.8" rx="1.4" fill="#3a9fdc" stroke="#1f78b4" stroke-width="0.7"/><path d="M5 6.9 h3.8 M6.9 5 v3.8" stroke="#fff" stroke-width="1.2"/></svg>
<svg style="position:absolute;left:988.40px;top:62.00px" width="14.00" height="13.00" viewBox="0 0 14 13"><path d="M0.6 1.6 h3.6 l1 1.2 h4 v6 h-8.6z" fill="#f8dc7a" stroke="#d0a52a" stroke-width="0.7"/><path d="M5.4 5.4 h3 l0.9 1 h3.6 v5.2 h-7.5z" fill="#f8dc7a" stroke="#d0a52a" stroke-width="0.7"/><rect x="3.4" y="4" width="7" height="5.8" rx="1.4" fill="#3a9fdc" stroke="#1f78b4" stroke-width="0.7"/><path d="M5 6.9 h3.8" stroke="#fff" stroke-width="1.2"/></svg>
<svg style="position:absolute;left:1004.60px;top:61.60px" width="13.40" height="13.40" viewBox="0 0 13 13"><path d="M0.8 0.8 L6.2 6.2" stroke="#6a6a72" stroke-width="1.1"/><path d="M6.4 6.4 L11.4 11.2" stroke="#d8344a" stroke-width="3.2" stroke-linecap="round"/><path d="M7.6 6.6 L11.6 10.4" stroke="#fff" stroke-width="0.9" stroke-dasharray="1 1.1" opacity="0.8"/><circle cx="10.2" cy="2.4" r="2.1" fill="none" stroke="#a4acb6" stroke-width="1.5"/><path d="M10.4 0 v2.4" stroke="#fbefe6" stroke-width="1.3"/><path d="M8.8 3.8 L6.2 6.4" stroke="#a4acb6" stroke-width="1.8"/><path d="M6.4 6.2 L1.8 11" stroke="#1f62b8" stroke-width="3.2" stroke-linecap="round"/></svg>
<svg width="0" height="0" style="position:absolute"><defs><linearGradient id="ghd" x1="0" y1="0" x2="0" y2="1"><stop offset="0" stop-color="#b4b4b4"/><stop offset="0.45" stop-color="#8e8e8e"/><stop offset="1" stop-color="#6c6c6c"/></linearGradient><linearGradient id="ghg" x1="0" y1="0" x2="0" y2="1"><stop offset="0" stop-color="#b8f0b8"/><stop offset="0.6" stop-color="#8ee392"/><stop offset="1" stop-color="#78d87e"/></linearGradient><linearGradient id="tg" x1="0" y1="0" x2="0" y2="1"><stop offset="0" stop-color="#adadad"/><stop offset="0.5" stop-color="#979797"/><stop offset="0.57" stop-color="#808080"/><stop offset="1" stop-color="#747474"/></linearGradient></defs></svg>
<svg style="position:absolute;left:823px;top:80px" width="171.60" height="102.80"><g transform="translate(0.00,0.00)"><defs><clipPath id="gc1"><rect x="3.15" y="3.15" width="162.30" height="93.50" rx="5.0"/></clipPath></defs><rect x="4.15" y="4.15" width="162.30" height="93.50" rx="6.0" fill="#000" opacity="0.10"/><rect x="3.15" y="3.15" width="162.30" height="93.50" rx="5.0" fill="#fff"/><g clip-path="url(#gc1)"><rect x="2" y="2" width="164.60" height="15.40" fill="url(#ghd)"/><rect x="2" y="17.00" width="164.60" height="1.3" fill="#3a3a3a"/></g><rect x="3.15" y="3.15" width="162.30" height="93.50" rx="5.0" fill="none" stroke="#141414" stroke-width="2.30"/></g></svg>
<svg style="position:absolute;left:829.80px;top:84.80px" width="12.00" height="12.00" viewBox="0 0 12 12"><path d="M1 6 l4 -3 h5 l-4 3z M1 6 l5 4 l4 -7" fill="#d8ecf8" stroke="#8ab0cc" stroke-width="0.7"/><path d="M6 10 l5.4 -6" stroke="#e8f4fc" stroke-width="1"/></svg>
<div class="t" style="left:844.20px;top:85.32px;font-size:8.90px;line-height:10.68px;letter-spacing:-0.471px;color:#fff;">Math</div>
<svg style="position:absolute;left:834px;top:105px;overflow:visible" width="33" height="33" viewBox="0 0 33 33" font-family="Liberation Sans, sans-serif"><g transform="translate(0.00,0.60)"><rect x="2" y="2.2" width="28" height="27.8" rx="3" fill="#000" opacity="0.22"/><rect x="0.7" y="0.7" width="27.3" height="27.0" rx="2.6" fill="url(#tg)" stroke="#3c3c3c" stroke-width="1.4"/><rect x="1.7" y="1.7" width="25.3" height="25.0" rx="2" fill="none" stroke="#c4c4c4" stroke-width="0.6" opacity="0.8"/><path d="M2 7.2 L9 22.4 M9 7.2 L2 22.4 M15.8 22.6 L20.3 7.2 L24.9 22.6 M17.4 17.2 H23.2" stroke="#8a1014" stroke-width="3.8" fill="none" stroke-linejoin="round"/><path d="M2 7.2 L9 22.4 M9 7.2 L2 22.4 M15.8 22.6 L20.3 7.2 L24.9 22.6 M17.4 17.2 H23.2" stroke="#e2262c" stroke-width="2.6" fill="none" stroke-linejoin="round"/><path d="M13.00 7.20 L13.00 12.00 M15.08 8.40 L10.92 10.80 M15.08 10.80 L10.92 8.40 " stroke="#9a1014" stroke-width="2.5" stroke-linecap="round"/><path d="M13.00 7.20 L13.00 12.00 M15.08 8.40 L10.92 10.80 M15.08 10.80 L10.92 8.40 " stroke="#e8242a" stroke-width="1.3" stroke-linecap="round"/><text x="10.6" y="24.4" font-size="9.5" font-weight="bold" fill="#3a86c8" stroke="#1f5a94" stroke-width="0.5">2</text><text x="17.6" y="24.6" font-size="9.5" font-weight="bold" fill="#5fb83a" stroke="#2f7a1a" stroke-width="0.5">3</text></g></svg>
<svg style="position:absolute;left:867px;top:105px;overflow:visible" width="33" height="33" viewBox="0 0 33 33" font-family="Liberation Sans, sans-serif"><g transform="translate(0.65,0.60)"><rect x="2" y="2.2" width="28" height="27.8" rx="3" fill="#000" opacity="0.22"/><rect x="0.7" y="0.7" width="27.3" height="27.0" rx="2.6" fill="url(#tg)" stroke="#3c3c3c" stroke-width="1.4"/><rect x="1.7" y="1.7" width="25.3" height="25.0" rx="2" fill="none" stroke="#c4c4c4" stroke-width="0.6" opacity="0.8"/><text x="10.5" y="24.5" font-size="9.5" font-weight="bold" fill="#3a86c8" stroke="#1f5a94" stroke-width="0.5">2</text><text x="17.8" y="24.8" font-size="10.5" font-weight="bold" fill="#5fb83a" stroke="#2f7a1a" stroke-width="0.5">3</text><path d="M3 14.6 h6" stroke="#e0242a" stroke-width="2.4"/><path d="M8.2 14 v10" stroke="#c81c22" stroke-width="2.6"/><path d="M14.40 2.80 L14.40 18.80 M21.33 6.80 L7.47 14.80 M21.33 14.80 L7.47 6.80 " stroke="#9a1014" stroke-width="4.8" stroke-linecap="round"/><path d="M14.40 2.80 L14.40 18.80 M21.33 6.80 L7.47 14.80 M21.33 14.80 L7.47 6.80 " stroke="#e8242a" stroke-width="3.6" stroke-linecap="round"/><path d="M4 5 l4 3.6 M8 3 l1 3" stroke="#7ae05a" stroke-width="1.6"/></g></svg>
<svg style="position:absolute;left:901px;top:105px;overflow:visible" width="33" height="33" viewBox="0 0 33 33" font-family="Liberation Sans, sans-serif"><g transform="translate(0.30,0.60)"><rect x="2" y="2.2" width="28" height="27.8" rx="3" fill="#000" opacity="0.22"/><rect x="0.7" y="0.7" width="27.3" height="27.0" rx="2.6" fill="url(#tg)" stroke="#3c3c3c" stroke-width="1.4"/><rect x="1.7" y="1.7" width="25.3" height="25.0" rx="2" fill="none" stroke="#c4c4c4" stroke-width="0.6" opacity="0.8"/><path d="M2 7.2 L9 22.4 M9 7.2 L2 22.4 M15.8 22.6 L20.3 7.2 L24.9 22.6 M17.4 17.2 H23.2" stroke="#8a1014" stroke-width="3.8" fill="none" stroke-linejoin="round"/><path d="M2 7.2 L9 22.4 M9 7.2 L2 22.4 M15.8 22.6 L20.3 7.2 L24.9 22.6 M17.4 17.2 H23.2" stroke="#e2262c" stroke-width="2.6" fill="none" stroke-linejoin="round"/><path d="M13.00 7.20 L13.00 12.00 M15.08 8.40 L10.92 10.80 M15.08 10.80 L10.92 8.40 " stroke="#9a1014" stroke-width="2.5" stroke-linecap="round"/><path d="M13.00 7.20 L13.00 12.00 M15.08 8.40 L10.92 10.80 M15.08 10.80 L10.92 8.40 " stroke="#e8242a" stroke-width="1.3" stroke-linecap="round"/><text x="10.6" y="24.4" font-size="9.5" font-weight="bold" fill="#3a86c8" stroke="#1f5a94" stroke-width="0.5">2</text><text x="17.6" y="24.6" font-size="9.5" font-weight="bold" fill="#5fb83a" stroke="#2f7a1a" stroke-width="0.5">3</text><path d="M7.6 2.6 v4.4 M11.6 3.4 l1.2 3" stroke="#7ae05a" stroke-width="1.7"/></g></svg>
<svg style="position:absolute;left:934px;top:105px;overflow:visible" width="33" height="33" viewBox="0 0 33 33" font-family="Liberation Sans, sans-serif"><g transform="translate(0.95,0.60)"><rect x="2" y="2.2" width="28" height="27.8" rx="3" fill="#000" opacity="0.22"/><rect x="0.7" y="0.7" width="27.3" height="27.0" rx="2.6" fill="url(#tg)" stroke="#3c3c3c" stroke-width="1.4"/><rect x="1.7" y="1.7" width="25.3" height="25.0" rx="2" fill="none" stroke="#c4c4c4" stroke-width="0.6" opacity="0.8"/><path d="M6 16.4 l2.4 4.4 l2 -3 l2.4 4.6 l2.6 -4.6 l2.4 2.8 l1.6 -5 l-7 -3z" fill="#d8222a" stroke="#8a1014" stroke-width="0.5"/><path d="M19.6 15 L24.8 19.6 L13.2 25.6 L12 22z" fill="#c6c6c6"/><path d="M3.8 17.2 L7.2 20.6 L9.8 17.6 L12.8 22 L15.6 18.4 L18.4 22.4 L21 18.2 L23.4 20.4 L13.2 25.6 Z" fill="#f6de3a" stroke="#caa41c" stroke-width="0.5"/><path d="M12.60 3.00 L12.60 17.00 M18.66 6.50 L6.54 13.50 M18.66 13.50 L6.54 6.50 " stroke="#9a1014" stroke-width="4.5" stroke-linecap="round"/><path d="M12.60 3.00 L12.60 17.00 M18.66 6.50 L6.54 13.50 M18.66 13.50 L6.54 6.50 " stroke="#e8242a" stroke-width="3.3" stroke-linecap="round"/></g></svg>
<svg style="position:absolute;left:834px;top:139px;overflow:visible" width="33" height="33" viewBox="0 0 33 33" font-family="Liberation Sans, sans-serif"><g transform="translate(0.00,0.30)"><rect x="2" y="2.2" width="28" height="27.8" rx="3" fill="#000" opacity="0.22"/><rect x="0.7" y="0.7" width="27.3" height="27.0" rx="2.6" fill="url(#tg)" stroke="#3c3c3c" stroke-width="1.4"/><rect x="1.7" y="1.7" width="25.3" height="25.0" rx="2" fill="none" stroke="#c4c4c4" stroke-width="0.6" opacity="0.8"/><text x="2.4" y="14.2" font-size="14.0" font-weight="bold" fill="#6ad868" stroke="#2f8a2a" stroke-width="0.5" letter-spacing="0.06">X</text><text x="15.4" y="14.2" font-size="14.0" font-weight="bold" fill="#6ad868" stroke="#2f8a2a" stroke-width="0.5" letter-spacing="0.09">A</text><path d="M6.4 18.6 L10.4 8.8 L13 15.6 L14.8 11.6 L17.4 18 L19.2 13.2 L21.8 18.8 L13 23 Z" fill="#d8222a" stroke="#8a1014" stroke-width="0.6"/><path d="M19.6 15 L24.8 19.6 L13.2 25.6 L12 22z" fill="#c6c6c6"/><path d="M3.8 17.2 L7.2 20.6 L9.8 17.6 L12.8 22 L15.6 18.4 L18.4 22.4 L21 18.2 L23.4 20.4 L13.2 25.6 Z" fill="#f6de3a" stroke="#caa41c" stroke-width="0.5"/></g></svg>
<svg style="position:absolute;left:867px;top:139px;overflow:visible" width="33" height="33" viewBox="0 0 33 33" font-family="Liberation Sans, sans-serif"><g transform="translate(0.65,0.30)"><rect x="2" y="2.2" width="28" height="27.8" rx="3" fill="#000" opacity="0.22"/><rect x="0.7" y="0.7" width="27.3" height="27.0" rx="2.6" fill="url(#tg)" stroke="#3c3c3c" stroke-width="1.4"/><rect x="1.7" y="1.7" width="25.3" height="25.0" rx="2" fill="none" stroke="#c4c4c4" stroke-width="0.6" opacity="0.8"/><text x="10.5" y="24.5" font-size="9.5" font-weight="bold" fill="#3a86c8" stroke="#1f5a94" stroke-width="0.5">2</text><text x="17.8" y="24.8" font-size="10.5" font-weight="bold" fill="#5fb83a" stroke="#2f7a1a" stroke-width="0.5">3</text><path d="M3 14.6 h6" stroke="#e0242a" stroke-width="2.4"/><path d="M8.2 14 v10" stroke="#c81c22" stroke-width="2.6"/><path d="M14.40 2.80 L14.40 18.80 M21.33 6.80 L7.47 14.80 M21.33 14.80 L7.47 6.80 " stroke="#9a1014" stroke-width="4.8" stroke-linecap="round"/><path d="M14.40 2.80 L14.40 18.80 M21.33 6.80 L7.47 14.80 M21.33 14.80 L7.47 6.80 " stroke="#e8242a" stroke-width="3.6" stroke-linecap="round"/></g></svg>
<svg style="position:absolute;left:823px;top:181px" width="171.60" height="102.80"><g transform="translate(0.00,0.20)"><defs><clipPath id="gc2"><rect x="3.15" y="3.15" width="162.30" height="93.50" rx="5.0"/></clipPath></defs><rect x="4.15" y="4.15" width="162.30" height="93.50" rx="6.0" fill="#000" opacity="0.10"/><rect x="3.15" y="3.15" width="162.30" height="93.50" rx="5.0" fill="#fff"/><g clip-path="url(#gc2)"><rect x="2" y="2" width="164.60" height="15.40" fill="url(#ghd)"/><rect x="2" y="17.00" width="164.60" height="1.3" fill="#3a3a3a"/></g><rect x="3.15" y="3.15" width="162.30" height="93.50" rx="5.0" fill="none" stroke="#141414" stroke-width="2.30"/></g></svg>
<svg style="position:absolute;left:829.80px;top:186.00px" width="12.00" height="12.00" viewBox="0 0 12 12"><text x="0" y="10" font-size="8" font-weight="bold" fill="#e06a5a" font-family="Liberation Sans">1</text><text x="4" y="10" font-size="8" font-weight="bold" fill="#6aa8e0" font-family="Liberation Sans">2</text><text x="8" y="10" font-size="8" font-weight="bold" fill="#7ac85a" font-family="Liberation Sans">3</text></svg>
<div class="t" style="left:844.20px;top:186.52px;font-size:8.90px;line-height:10.68px;letter-spacing:-0.272px;color:#fff;">Integer</div>
<svg style="position:absolute;left:834px;top:207px;overflow:visible" width="33" height="33" viewBox="0 0 33 33" font-family="Liberation Sans, sans-serif"><g transform="translate(0.00,0.20)"><rect x="2" y="2.2" width="28" height="27.8" rx="3" fill="#000" opacity="0.22"/><rect x="0.7" y="0.7" width="27.3" height="27.0" rx="2.6" fill="url(#tg)" stroke="#3c3c3c" stroke-width="1.4"/><rect x="1.7" y="1.7" width="25.3" height="25.0" rx="2" fill="none" stroke="#c4c4c4" stroke-width="0.6" opacity="0.8"/><path d="M2 7.2 L9 22.4 M9 7.2 L2 22.4 M15.8 22.6 L20.3 7.2 L24.9 22.6 M17.4 17.2 H23.2" stroke="#8a1014" stroke-width="3.8" fill="none" stroke-linejoin="round"/><path d="M2 7.2 L9 22.4 M9 7.2 L2 22.4 M15.8 22.6 L20.3 7.2 L24.9 22.6 M17.4 17.2 H23.2" stroke="#e2262c" stroke-width="2.6" fill="none" stroke-linejoin="round"/><path d="M13.00 7.20 L13.00 12.00 M15.08 8.40 L10.92 10.80 M15.08 10.80 L10.92 8.40 " stroke="#9a1014" stroke-width="2.5" stroke-linecap="round"/><path d="M13.00 7.20 L13.00 12.00 M15.08 8.40 L10.92 10.80 M15.08 10.80 L10.92 8.40 " stroke="#e8242a" stroke-width="1.3" stroke-linecap="round"/><text x="10.6" y="24.4" font-size="9.5" font-weight="bold" fill="#3a86c8" stroke="#1f5a94" stroke-width="0.5">2</text><text x="17.6" y="24.6" font-size="9.5" font-weight="bold" fill="#5fb83a" stroke="#2f7a1a" stroke-width="0.5">3</text></g></svg>
<svg style="position:absolute;left:867px;top:207px;overflow:visible" width="33" height="33" viewBox="0 0 33 33" font-family="Liberation Sans, sans-serif"><g transform="translate(0.65,0.20)"><rect x="2" y="2.2" width="28" height="27.8" rx="3" fill="#000" opacity="0.22"/><rect x="0.7" y="0.7" width="27.3" height="27.0" rx="2.6" fill="url(#tg)" stroke="#3c3c3c" stroke-width="1.4"/><rect x="1.7" y="1.7" width="25.3" height="25.0" rx="2" fill="none" stroke="#c4c4c4" stroke-width="0.6" opacity="0.8"/><path d="M3.6 7.6 h8 M7.6 3.6 v8" stroke="#6ad86a" stroke-width="2.4"/><text x="19.4" y="13.5" font-size="11.0" font-weight="bold" fill="#7cc85a" stroke="#4a8a3a" stroke-width="0.5">3</text><path d="M18.4 24.4 V15.4 M18.4 16 Q13.6 18.4 11.4 23.2 M18.4 16 Q23 18.4 25.2 23.2" stroke="#3f8f1c" stroke-width="4.2" fill="none" stroke-linecap="round"/><path d="M18.4 24.4 V15.4 M18.4 16 Q13.6 18.4 11.4 23.2 M18.4 16 Q23 18.4 25.2 23.2" stroke="#84dc3c" stroke-width="2.8" fill="none" stroke-linecap="round"/><path d="M5 23 Q8 18.6 12.4 16 Q15.6 13.6 16.2 9.4" stroke="#1a5aa8" stroke-width="5.4" fill="none" stroke-linecap="round"/><path d="M5 23 Q8 18.6 12.4 16 Q15.6 13.6 16.2 9.4" stroke="#3a96ec" stroke-width="3.8" fill="none" stroke-linecap="round"/><path d="M17.4 4.8 l-5.4 5 l7.6 2z" fill="#3a96ec" stroke="#1a5aa8" stroke-width="0.7" stroke-linejoin="round"/></g></svg>
<svg style="position:absolute;left:901px;top:207px;overflow:visible" width="33" height="33" viewBox="0 0 33 33" font-family="Liberation Sans, sans-serif"><g transform="translate(0.30,0.20)"><rect x="2" y="2.2" width="28" height="27.8" rx="3" fill="#000" opacity="0.22"/><rect x="0.7" y="0.7" width="27.3" height="27.0" rx="2.6" fill="url(#tg)" stroke="#3c3c3c" stroke-width="1.4"/><rect x="1.7" y="1.7" width="25.3" height="25.0" rx="2" fill="none" stroke="#c4c4c4" stroke-width="0.6" opacity="0.8"/><text x="10.5" y="24.5" font-size="9.5" font-weight="bold" fill="#3a86c8" stroke="#1f5a94" stroke-width="0.5">2</text><text x="17.8" y="24.8" font-size="10.5" font-weight="bold" fill="#5fb83a" stroke="#2f7a1a" stroke-width="0.5">3</text><path d="M3 14.6 h6" stroke="#e0242a" stroke-width="2.4"/><path d="M8.2 14 v10" stroke="#c81c22" stroke-width="2.6"/><path d="M14.40 2.80 L14.40 18.80 M21.33 6.80 L7.47 14.80 M21.33 14.80 L7.47 6.80 " stroke="#9a1014" stroke-width="4.8" stroke-linecap="round"/><path d="M14.40 2.80 L14.40 18.80 M21.33 6.80 L7.47 14.80 M21.33 14.80 L7.47 6.80 " stroke="#e8242a" stroke-width="3.6" stroke-linecap="round"/></g></svg>
<svg style="position:absolute;left:934px;top:207px;overflow:visible" width="33" height="33" viewBox="0 0 33 33" font-family="Liberation Sans, sans-serif"><g transform="translate(0.95,0.20)"><rect x="2" y="2.2" width="28" height="27.8" rx="3" fill="#000" opacity="0.22"/><rect x="0.7" y="0.7" width="27.3" height="27.0" rx="2.6" fill="url(#tg)" stroke="#3c3c3c" stroke-width="1.4"/><rect x="1.7" y="1.7" width="25.3" height="25.0" rx="2" fill="none" stroke="#c4c4c4" stroke-width="0.6" opacity="0.8"/><text x="3.4" y="13.5" font-size="12.0" font-weight="bold" fill="#d85a5a" stroke="#a03a3a" stroke-width="0.5">1</text><text x="19.4" y="13.5" font-size="11.0" font-weight="bold" fill="#7cc85a" stroke="#4a8a3a" stroke-width="0.5">3</text><path d="M14.2 24.4 V10.6 M14.2 14.6 Q7.8 17.5 4.6 23 M14.2 14.6 Q20.6 17.5 23.8 23" stroke="#3f8f1c" stroke-width="4.6" fill="none" stroke-linecap="round"/><path d="M14.2 24.4 V10.6 M14.2 14.6 Q7.8 17.5 4.6 23 M14.2 14.6 Q20.6 17.5 23.8 23" stroke="#84dc3c" stroke-width="3.1" fill="none" stroke-linecap="round"/><path d="M14.2 6.6 l-4.8 6.2 h9.6z" fill="#84dc3c" stroke="#3f8f1c" stroke-width="0.8" stroke-linejoin="round"/></g></svg>
<svg style="position:absolute;left:834px;top:240px;overflow:visible" width="33" height="33" viewBox="0 0 33 33" font-family="Liberation Sans, sans-serif"><g transform="translate(0.00,0.80)"><rect x="2" y="2.2" width="28" height="27.8" rx="3" fill="#000" opacity="0.22"/><rect x="0.7" y="0.7" width="27.3" height="27.0" rx="2.6" fill="url(#tg)" stroke="#3c3c3c" stroke-width="1.4"/><rect x="1.7" y="1.7" width="25.3" height="25.0" rx="2" fill="none" stroke="#c4c4c4" stroke-width="0.6" opacity="0.8"/><text x="3.4" y="13.5" font-size="12.0" font-weight="bold" fill="#d85a5a" stroke="#a03a3a" stroke-width="0.5">1</text><text x="19.4" y="13.5" font-size="11.0" font-weight="bold" fill="#7cc85a" stroke="#4a8a3a" stroke-width="0.5">3</text><path d="M18.4 24.4 V15.4 M18.4 16 Q13.6 18.4 11.4 23.2 M18.4 16 Q23 18.4 25.2 23.2" stroke="#3f8f1c" stroke-width="4.2" fill="none" stroke-linecap="round"/><path d="M18.4 24.4 V15.4 M18.4 16 Q13.6 18.4 11.4 23.2 M18.4 16 Q23 18.4 25.2 23.2" stroke="#84dc3c" stroke-width="2.8" fill="none" stroke-linecap="round"/><path d="M5 23 Q8 18.6 12.4 16 Q15.6 13.6 16.2 9.4" stroke="#1a5aa8" stroke-width="5.4" fill="none" stroke-linecap="round"/><path d="M5 23 Q8 18.6 12.4 16 Q15.6 13.6 16.2 9.4" stroke="#3a96ec" stroke-width="3.8" fill="none" stroke-linecap="round"/><path d="M17.4 4.8 l-5.4 5 l7.6 2z" fill="#3a96ec" stroke="#1a5aa8" stroke-width="0.7" stroke-linejoin="round"/></g></svg>
<svg style="position:absolute;left:823px;top:282px" width="104.00" height="69.00"><g transform="translate(0.00,0.20)"><defs><clipPath id="gc3"><rect x="3.15" y="3.15" width="94.70" height="59.70" rx="5.0"/></clipPath></defs><rect x="4.15" y="4.15" width="94.70" height="59.70" rx="6.0" fill="#000" opacity="0.10"/><rect x="3.15" y="3.15" width="94.70" height="59.70" rx="5.0" fill="#fff"/><g clip-path="url(#gc3)"><rect x="2" y="2" width="97.00" height="15.40" fill="url(#ghg)"/><rect x="2" y="17.00" width="97.00" height="1.3" fill="#4fb85a"/></g><rect x="3.15" y="3.15" width="94.70" height="59.70" rx="5.0" fill="none" stroke="#469f4e" stroke-width="2.30"/></g></svg>
<svg style="position:absolute;left:829.80px;top:287.00px" width="12.00" height="12.00" viewBox="0 0 12 12"><circle cx="6" cy="6" r="5.4" fill="#f8f0f0" stroke="#d06a7a" stroke-width="0.8"/><path d="M3 4 h6 M3 6.4 h6 M4 8.6 h4" stroke="#d0445a" stroke-width="1.1"/></svg>
<div class="t" style="left:844.20px;top:287.52px;font-size:8.90px;line-height:10.68px;letter-spacing:-0.155px;color:#f4fff4;">Synchronization</div>
<svg style="position:absolute;left:834px;top:308px;overflow:visible" width="33" height="33" viewBox="0 0 33 33" font-family="Liberation Sans, sans-serif"><g transform="translate(0.00,0.00)"><rect x="2" y="2.2" width="28" height="27.8" rx="3" fill="#000" opacity="0.22"/><rect x="0.7" y="0.7" width="27.3" height="27.0" rx="2.6" fill="url(#tg)" stroke="#3c3c3c" stroke-width="1.4"/><rect x="1.7" y="1.7" width="25.3" height="25.0" rx="2" fill="none" stroke="#c4c4c4" stroke-width="0.6" opacity="0.8"/><path d="M4.4 21 L14 17.6 L24 21 L14 25.6z" fill="#8a5a2a"/><text x="9.0" y="11.0" font-size="9.0" font-weight="bold" fill="#e06a5a">A</text><path d="M14.2 24.4 V10.6 M14.2 14.6 Q7.8 17.5 4.6 23 M14.2 14.6 Q20.6 17.5 23.8 23" stroke="#3f8f1c" stroke-width="4.6" fill="none" stroke-linecap="round"/><path d="M14.2 24.4 V10.6 M14.2 14.6 Q7.8 17.5 4.6 23 M14.2 14.6 Q20.6 17.5 23.8 23" stroke="#84dc3c" stroke-width="3.1" fill="none" stroke-linecap="round"/><path d="M14.2 6.6 l-4.8 6.2 h9.6z" fill="#84dc3c" stroke="#3f8f1c" stroke-width="0.8" stroke-linejoin="round"/></g></svg>
<svg style="position:absolute;left:867px;top:308px;overflow:visible" width="33" height="33" viewBox="0 0 33 33" font-family="Liberation Sans, sans-serif"><g transform="translate(0.65,0.00)"><rect x="2" y="2.2" width="28" height="27.8" rx="3" fill="#000" opacity="0.22"/><rect x="0.7" y="0.7" width="27.3" height="27.0" rx="2.6" fill="url(#tg)" stroke="#3c3c3c" stroke-width="1.4"/><rect x="1.7" y="1.7" width="25.3" height="25.0" rx="2" fill="none" stroke="#c4c4c4" stroke-width="0.6" opacity="0.8"/><path d="M6.4 17.4 L14 15 L22 17.4 L22 23 L14 26 L6.4 23z" fill="#9a5a22" stroke="#5a3210" stroke-width="0.6"/><path d="M6.4 17.4 L14 20 L22 17.4" stroke="#5a3210" stroke-width="0.6" fill="none"/><text x="10.6" y="11.0" font-size="9.0" font-weight="bold" fill="#e09a6a">V</text><path d="M14 20 V13 M14 15 Q8 13 6.6 6.6 M14 15 Q20 13 21.6 6.6" stroke="#3a8a1a" stroke-width="4.2" fill="none" stroke-linecap="round"/><path d="M14 20 V13 M14 15 Q8 13 6.6 6.6 M14 15 Q20 13 21.6 6.6" stroke="#7cd83a" stroke-width="2.8" fill="none" stroke-linecap="round"/></g></svg>
<svg style="position:absolute;left:924px;top:282px" width="69.20" height="136.30"><g transform="translate(0.60,0.20)"><defs><clipPath id="gc4"><rect x="3.15" y="3.15" width="59.90" height="127.00" rx="5.0"/></clipPath></defs><rect x="4.15" y="4.15" width="59.90" height="127.00" rx="6.0" fill="#000" opacity="0.10"/><rect x="3.15" y="3.15" width="59.90" height="127.00" rx="5.0" fill="#fff"/><g clip-path="url(#gc4)"><rect x="2" y="2" width="62.20" height="15.40" fill="url(#ghd)"/><rect x="2" y="17.00" width="62.20" height="1.3" fill="#3a3a3a"/></g><rect x="3.15" y="3.15" width="59.90" height="127.00" rx="5.0" fill="none" stroke="#141414" stroke-width="2.30"/></g></svg>
<svg style="position:absolute;left:931.40px;top:287.00px" width="12.00" height="12.00" viewBox="0 0 12 12"><path d="M1 4 h5 M3.5 1.5 v5" stroke="#6ad86a" stroke-width="1.6"/><text x="5" y="11" font-size="8" font-weight="bold" fill="#7ac85a" font-family="Liberation Sans">3</text><path d="M2 9.6 l3 -2" stroke="#3a8ae0" stroke-width="1.6"/></svg>
<div class="t" style="left:945.80px;top:287.52px;font-size:8.90px;line-height:10.68px;letter-spacing:-0.225px;color:#fff;">Unsigned</div>
<svg style="position:absolute;left:934px;top:308px;overflow:visible" width="33" height="33" viewBox="0 0 33 33" font-family="Liberation Sans, sans-serif"><g transform="translate(0.95,0.00)"><rect x="2" y="2.2" width="28" height="27.8" rx="3" fill="#000" opacity="0.22"/><rect x="0.7" y="0.7" width="27.3" height="27.0" rx="2.6" fill="url(#tg)" stroke="#3c3c3c" stroke-width="1.4"/><rect x="1.7" y="1.7" width="25.3" height="25.0" rx="2" fill="none" stroke="#c4c4c4" stroke-width="0.6" opacity="0.8"/><path d="M3.6 7.6 h8 M7.6 3.6 v8" stroke="#6ad86a" stroke-width="2.4"/><text x="19.4" y="13.5" font-size="11.0" font-weight="bold" fill="#7cc85a" stroke="#4a8a3a" stroke-width="0.5">3</text><path d="M14.2 24.4 V10.6 M14.2 14.6 Q7.8 17.5 4.6 23 M14.2 14.6 Q20.6 17.5 23.8 23" stroke="#3f8f1c" stroke-width="4.6" fill="none" stroke-linecap="round"/><path d="M14.2 24.4 V10.6 M14.2 14.6 Q7.8 17.5 4.6 23 M14.2 14.6 Q20.6 17.5 23.8 23" stroke="#84dc3c" stroke-width="3.1" fill="none" stroke-linecap="round"/><path d="M14.2 6.6 l-4.8 6.2 h9.6z" fill="#84dc3c" stroke="#3f8f1c" stroke-width="0.8" stroke-linejoin="round"/></g></svg>
<svg style="position:absolute;left:934px;top:341px;overflow:visible" width="33" height="33" viewBox="0 0 33 33" font-family="Liberation Sans, sans-serif"><g transform="translate(0.95,0.60)"><rect x="2" y="2.2" width="28" height="27.8" rx="3" fill="#000" opacity="0.22"/><rect x="0.7" y="0.7" width="27.3" height="27.0" rx="2.6" fill="url(#tg)" stroke="#3c3c3c" stroke-width="1.4"/><rect x="1.7" y="1.7" width="25.3" height="25.0" rx="2" fill="none" stroke="#c4c4c4" stroke-width="0.6" opacity="0.8"/><path d="M2 7.2 L9 22.4 M9 7.2 L2 22.4 M15.8 22.6 L20.3 7.2 L24.9 22.6 M17.4 17.2 H23.2" stroke="#8a1014" stroke-width="3.8" fill="none" stroke-linejoin="round"/><path d="M2 7.2 L9 22.4 M9 7.2 L2 22.4 M15.8 22.6 L20.3 7.2 L24.9 22.6 M17.4 17.2 H23.2" stroke="#e2262c" stroke-width="2.6" fill="none" stroke-linejoin="round"/><path d="M13.00 7.20 L13.00 12.00 M15.08 8.40 L10.92 10.80 M15.08 10.80 L10.92 8.40 " stroke="#9a1014" stroke-width="2.5" stroke-linecap="round"/><path d="M13.00 7.20 L13.00 12.00 M15.08 8.40 L10.92 10.80 M15.08 10.80 L10.92 8.40 " stroke="#e8242a" stroke-width="1.3" stroke-linecap="round"/><text x="10.6" y="24.4" font-size="9.5" font-weight="bold" fill="#3a86c8" stroke="#1f5a94" stroke-width="0.5">2</text><text x="17.6" y="24.6" font-size="9.5" font-weight="bold" fill="#5fb83a" stroke="#2f7a1a" stroke-width="0.5">3</text><path d="M7.6 2.6 v4.4 M11.6 3.4 l1.2 3" stroke="#7ae05a" stroke-width="1.7"/></g></svg>
<svg style="position:absolute;left:934px;top:375px;overflow:visible" width="33" height="33" viewBox="0 0 33 33" font-family="Liberation Sans, sans-serif"><g transform="translate(0.95,0.20)"><rect x="2" y="2.2" width="28" height="27.8" rx="3" fill="#000" opacity="0.22"/><rect x="0.7" y="0.7" width="27.3" height="27.0" rx="2.6" fill="url(#tg)" stroke="#3c3c3c" stroke-width="1.4"/><rect x="1.7" y="1.7" width="25.3" height="25.0" rx="2" fill="none" stroke="#c4c4c4" stroke-width="0.6" opacity="0.8"/><text x="10.5" y="24.5" font-size="9.5" font-weight="bold" fill="#3a86c8" stroke="#1f5a94" stroke-width="0.5">2</text><text x="17.8" y="24.8" font-size="10.5" font-weight="bold" fill="#5fb83a" stroke="#2f7a1a" stroke-width="0.5">3</text><path d="M3 14.6 h6" stroke="#e0242a" stroke-width="2.4"/><path d="M8.2 14 v10" stroke="#c81c22" stroke-width="2.6"/><path d="M14.40 2.80 L14.40 18.80 M21.33 6.80 L7.47 14.80 M21.33 14.80 L7.47 6.80 " stroke="#9a1014" stroke-width="4.8" stroke-linecap="round"/><path d="M14.40 2.80 L14.40 18.80 M21.33 6.80 L7.47 14.80 M21.33 14.80 L7.47 6.80 " stroke="#e8242a" stroke-width="3.6" stroke-linecap="round"/><path d="M4 5 l4 3.6 M8 3 l1 3" stroke="#7ae05a" stroke-width="1.6"/></g></svg>
<svg style="position:absolute;left:823px;top:349px" width="104.00" height="69.00"><g transform="translate(0.00,0.50)"><defs><clipPath id="gc5"><rect x="3.15" y="3.15" width="94.70" height="59.70" rx="5.0"/></clipPath></defs><rect x="4.15" y="4.15" width="94.70" height="59.70" rx="6.0" fill="#000" opacity="0.10"/><rect x="3.15" y="3.15" width="94.70" height="59.70" rx="5.0" fill="#fff"/><g clip-path="url(#gc5)"><rect x="2" y="2" width="97.00" height="15.40" fill="url(#ghd)"/><rect x="2" y="17.00" width="97.00" height="1.3" fill="#3a3a3a"/></g><rect x="3.15" y="3.15" width="94.70" height="59.70" rx="5.0" fill="none" stroke="#141414" stroke-width="2.30"/></g></svg>
<svg style="position:absolute;left:829.80px;top:354.30px" width="12.00" height="12.00" viewBox="0 0 12 12"><text x="-0.5" y="10" font-size="7.4" font-weight="bold" fill="#d89a7a" font-family="Liberation Sans" letter-spacing="-0.6">ABC</text></svg>
<div class="t" style="left:844.20px;top:354.82px;font-size:8.90px;line-height:10.68px;letter-spacing:-0.005px;color:#fff;">Text</div>
<svg style="position:absolute;left:834px;top:375px;overflow:visible" width="33" height="33" viewBox="0 0 33 33" font-family="Liberation Sans, sans-serif"><g transform="translate(0.00,0.10)"><rect x="2" y="2.2" width="28" height="27.8" rx="3" fill="#000" opacity="0.22"/><rect x="0.7" y="0.7" width="27.3" height="27.0" rx="2.6" fill="url(#tg)" stroke="#3c3c3c" stroke-width="1.4"/><rect x="1.7" y="1.7" width="25.3" height="25.0" rx="2" fill="none" stroke="#c4c4c4" stroke-width="0.6" opacity="0.8"/><text x="2.4" y="12.5" font-size="10.0" font-weight="bold" fill="#e0968a">A</text><text x="19.0" y="12.5" font-size="10.0" font-weight="bold" fill="#e0968a">C</text><path d="M18.4 24.4 V15.4 M18.4 16 Q13.6 18.4 11.4 23.2 M18.4 16 Q23 18.4 25.2 23.2" stroke="#3f8f1c" stroke-width="4.2" fill="none" stroke-linecap="round"/><path d="M18.4 24.4 V15.4 M18.4 16 Q13.6 18.4 11.4 23.2 M18.4 16 Q23 18.4 25.2 23.2" stroke="#84dc3c" stroke-width="2.8" fill="none" stroke-linecap="round"/><path d="M5 23 Q8 18.6 12.4 16 Q15.6 13.6 16.2 9.4" stroke="#1a5aa8" stroke-width="5.4" fill="none" stroke-linecap="round"/><path d="M5 23 Q8 18.6 12.4 16 Q15.6 13.6 16.2 9.4" stroke="#3a96ec" stroke-width="3.8" fill="none" stroke-linecap="round"/><path d="M17.4 4.8 l-5.4 5 l7.6 2z" fill="#3a96ec" stroke="#1a5aa8" stroke-width="0.7" stroke-linejoin="round"/></g></svg>
<svg style="position:absolute;left:867px;top:375px;overflow:visible" width="33" height="33" viewBox="0 0 33 33" font-family="Liberation Sans, sans-serif"><g transform="translate(0.65,0.10)"><rect x="2" y="2.2" width="28" height="27.8" rx="3" fill="#000" opacity="0.22"/><rect x="0.7" y="0.7" width="27.3" height="27.0" rx="2.6" fill="url(#tg)" stroke="#3c3c3c" stroke-width="1.4"/><rect x="1.7" y="1.7" width="25.3" height="25.0" rx="2" fill="none" stroke="#c4c4c4" stroke-width="0.6" opacity="0.8"/><text x="2.4" y="12.5" font-size="10.0" font-weight="bold" fill="#e0968a">A</text><text x="19.0" y="12.5" font-size="10.0" font-weight="bold" fill="#e0968a">C</text><path d="M14.2 24.4 V10.6 M14.2 14.6 Q7.8 17.5 4.6 23 M14.2 14.6 Q20.6 17.5 23.8 23" stroke="#3f8f1c" stroke-width="4.6" fill="none" stroke-linecap="round"/><path d="M14.2 24.4 V10.6 M14.2 14.6 Q7.8 17.5 4.6 23 M14.2 14.6 Q20.6 17.5 23.8 23" stroke="#84dc3c" stroke-width="3.1" fill="none" stroke-linecap="round"/><path d="M14.2 6.6 l-4.8 6.2 h9.6z" fill="#84dc3c" stroke="#3f8f1c" stroke-width="0.8" stroke-linejoin="round"/></g></svg>
<svg style="position:absolute;left:823px;top:416px" width="137.20" height="69.00"><g transform="translate(0.00,0.90)"><defs><clipPath id="gc6"><rect x="3.15" y="3.15" width="127.90" height="59.70" rx="5.0"/></clipPath></defs><rect x="4.15" y="4.15" width="127.90" height="59.70" rx="6.0" fill="#000" opacity="0.10"/><rect x="3.15" y="3.15" width="127.90" height="59.70" rx="5.0" fill="#fff"/><g clip-path="url(#gc6)"><rect x="2" y="2" width="130.20" height="15.40" fill="url(#ghd)"/><rect x="2" y="17.00" width="130.20" height="1.3" fill="#3a3a3a"/></g><rect x="3.15" y="3.15" width="127.90" height="59.70" rx="5.0" fill="none" stroke="#141414" stroke-width="2.30"/></g></svg>
<svg style="position:absolute;left:829.80px;top:421.70px" width="12.00" height="12.00" viewBox="0 0 12 12"><circle cx="6" cy="6" r="5.6" fill="#f4f0e8"/><path d="M6 6 L6 0.4 A5.6 5.6 0 0 1 11.2 4z" fill="#f0c84a"/><path d="M6 6 L11.2 4 A5.6 5.6 0 0 1 9.6 10.4z" fill="#ec5a8a"/><path d="M6 6 L9.6 10.4 A5.6 5.6 0 0 1 2.4 10.4z" fill="#8a6ae0"/><path d="M6 6 L2.4 10.4 A5.6 5.6 0 0 1 0.8 4z" fill="#5ac8e0"/><path d="M6 6 L0.8 4 A5.6 5.6 0 0 1 6 0.4z" fill="#8ae06a"/></svg>
<div class="t" style="left:844.20px;top:422.22px;font-size:8.90px;line-height:10.68px;letter-spacing:-0.193px;color:#fff;">Color</div>
<svg style="position:absolute;left:834px;top:442px;overflow:visible" width="33" height="33" viewBox="0 0 33 33" font-family="Liberation Sans, sans-serif"><g transform="translate(0.00,0.60)"><rect x="2" y="2.2" width="28" height="27.8" rx="3" fill="#000" opacity="0.22"/><rect x="0.7" y="0.7" width="27.3" height="27.0" rx="2.6" fill="url(#tg)" stroke="#3c3c3c" stroke-width="1.4"/><rect x="1.7" y="1.7" width="25.3" height="25.0" rx="2" fill="none" stroke="#c4c4c4" stroke-width="0.6" opacity="0.8"/><circle cx="11.5" cy="10.5" r="7.6" fill="#f4f0e8"/><path d="M11.5 10.5 L11.5 2.9 A7.6 7.6 0 0 1 18.6 7.8z" fill="#f0c84a"/><path d="M11.5 10.5 L18.6 7.8 A7.6 7.6 0 0 1 17.4 15.4z" fill="#ec7a6a"/><path d="M11.5 10.5 L11.5 2.9 A7.6 7.6 0 0 0 4.4 7.8z" fill="#7ad0e0"/><path d="M11.5 10.5 L4.4 7.8 A7.6 7.6 0 0 0 5.6 15.4z" fill="#9ad86a"/><path d="M14.2 24.4 V10.6 M14.2 14.6 Q7.8 17.5 4.6 23 M14.2 14.6 Q20.6 17.5 23.8 23" stroke="#3f8f1c" stroke-width="4.6" fill="none" stroke-linecap="round"/><path d="M14.2 24.4 V10.6 M14.2 14.6 Q7.8 17.5 4.6 23 M14.2 14.6 Q20.6 17.5 23.8 23" stroke="#84dc3c" stroke-width="3.1" fill="none" stroke-linecap="round"/><path d="M14.2 6.6 l-4.8 6.2 h9.6z" fill="#84dc3c" stroke="#3f8f1c" stroke-width="0.8" stroke-linejoin="round"/></g></svg>
<svg style="position:absolute;left:867px;top:442px;overflow:visible" width="33" height="33" viewBox="0 0 33 33" font-family="Liberation Sans, sans-serif"><g transform="translate(0.65,0.60)"><rect x="2" y="2.2" width="28" height="27.8" rx="3" fill="#000" opacity="0.22"/><rect x="0.7" y="0.7" width="27.3" height="27.0" rx="2.6" fill="url(#tg)" stroke="#3c3c3c" stroke-width="1.4"/><rect x="1.7" y="1.7" width="25.3" height="25.0" rx="2" fill="none" stroke="#c4c4c4" stroke-width="0.6" opacity="0.8"/><circle cx="11.5" cy="10.5" r="7.6" fill="#f4f0e8"/><path d="M11.5 10.5 L11.5 2.9 A7.6 7.6 0 0 1 18.6 7.8z" fill="#f0c84a"/><path d="M11.5 10.5 L18.6 7.8 A7.6 7.6 0 0 1 17.4 15.4z" fill="#ec7a6a"/><path d="M11.5 10.5 L11.5 2.9 A7.6 7.6 0 0 0 4.4 7.8z" fill="#7ad0e0"/><path d="M11.5 10.5 L4.4 7.8 A7.6 7.6 0 0 0 5.6 15.4z" fill="#9ad86a"/><path d="M18.4 24.4 V15.4 M18.4 16 Q13.6 18.4 11.4 23.2 M18.4 16 Q23 18.4 25.2 23.2" stroke="#3f8f1c" stroke-width="4.2" fill="none" stroke-linecap="round"/><path d="M18.4 24.4 V15.4 M18.4 16 Q13.6 18.4 11.4 23.2 M18.4 16 Q23 18.4 25.2 23.2" stroke="#84dc3c" stroke-width="2.8" fill="none" stroke-linecap="round"/><path d="M5 23 Q8 18.6 12.4 16 Q15.6 13.6 16.2 9.4" stroke="#1a5aa8" stroke-width="5.4" fill="none" stroke-linecap="round"/><path d="M5 23 Q8 18.6 12.4 16 Q15.6 13.6 16.2 9.4" stroke="#3a96ec" stroke-width="3.8" fill="none" stroke-linecap="round"/><path d="M17.4 4.8 l-5.4 5 l7.6 2z" fill="#3a96ec" stroke="#1a5aa8" stroke-width="0.7" stroke-linejoin="round"/></g></svg>
<svg style="position:absolute;left:901px;top:442px;overflow:visible" width="33" height="33" viewBox="0 0 33 33" font-family="Liberation Sans, sans-serif"><g transform="translate(0.30,0.60)"><rect x="2" y="2.2" width="28" height="27.8" rx="3" fill="#000" opacity="0.22"/><rect x="0.7" y="0.7" width="27.3" height="27.0" rx="2.6" fill="url(#tg)" stroke="#3c3c3c" stroke-width="1.4"/><rect x="1.7" y="1.7" width="25.3" height="25.0" rx="2" fill="none" stroke="#c4c4c4" stroke-width="0.6" opacity="0.8"/><circle cx="11.5" cy="10.5" r="7.6" fill="#f4f0e8"/><path d="M11.5 10.5 L11.5 2.9 A7.6 7.6 0 0 1 18.6 7.8z" fill="#f0c84a"/><path d="M11.5 10.5 L18.6 7.8 A7.6 7.6 0 0 1 17.4 15.4z" fill="#ec7a6a"/><path d="M11.5 10.5 L11.5 2.9 A7.6 7.6 0 0 0 4.4 7.8z" fill="#7ad0e0"/><path d="M11.5 10.5 L4.4 7.8 A7.6 7.6 0 0 0 5.6 15.4z" fill="#9ad86a"/><path d="M14.2 24.4 V10.6 M14.2 14.6 Q7.8 17.5 4.6 23 M14.2 14.6 Q20.6 17.5 23.8 23" stroke="#3f8f1c" stroke-width="4.6" fill="none" stroke-linecap="round"/><path d="M14.2 24.4 V10.6 M14.2 14.6 Q7.8 17.5 4.6 23 M14.2 14.6 Q20.6 17.5 23.8 23" stroke="#84dc3c" stroke-width="3.1" fill="none" stroke-linecap="round"/><path d="M14.2 6.6 l-4.8 6.2 h9.6z" fill="#84dc3c" stroke="#3f8f1c" stroke-width="0.8" stroke-linejoin="round"/></g></svg>
<svg style="position:absolute;left:823px;top:484px" width="171.20" height="69.00"><g transform="translate(0.00,0.20)"><defs><clipPath id="gc7"><rect x="3.15" y="3.15" width="161.90" height="59.70" rx="5.0"/></clipPath></defs><rect x="4.15" y="4.15" width="161.90" height="59.70" rx="6.0" fill="#000" opacity="0.10"/><rect x="3.15" y="3.15" width="161.90" height="59.70" rx="5.0" fill="#fff"/><g clip-path="url(#gc7)"><rect x="2" y="2" width="164.20" height="15.40" fill="url(#ghd)"/><rect x="2" y="17.00" width="164.20" height="1.3" fill="#3a3a3a"/></g><rect x="3.15" y="3.15" width="161.90" height="59.70" rx="5.0" fill="none" stroke="#141414" stroke-width="2.30"/></g></svg>
<svg style="position:absolute;left:829.80px;top:489.00px" width="12.00" height="12.00" viewBox="0 0 12 12"><path d="M0.6 9.4 Q6 12 11.4 8.6 L11 6 L1 6z" fill="#f2d23c"/><path d="M0.6 8 C1 2 2 -0.5 3.4 0.4 C4.6 1 4.8 4 6 4 C7.2 4 7.4 1.4 8.6 1.6 C10.2 2 11 5 11.2 7.8 C9.8 6 9 4.4 8.4 4.6 C7.4 4.8 7.2 7 6 7 C4.8 7 4.4 3.6 3.4 3.6 C2.4 3.6 1.8 6 0.6 8z" fill="#e02a1e"/></svg>
<div class="t" style="left:844.20px;top:489.52px;font-size:8.90px;line-height:10.68px;letter-spacing:-0.235px;color:#fff;">Analog</div>
<svg style="position:absolute;left:834px;top:510px;overflow:visible" width="33" height="33" viewBox="0 0 33 33" font-family="Liberation Sans, sans-serif"><g transform="translate(0.00,0.30)"><rect x="2" y="2.2" width="28" height="27.8" rx="3" fill="#000" opacity="0.22"/><rect x="0.7" y="0.7" width="27.3" height="27.0" rx="2.6" fill="url(#tg)" stroke="#3c3c3c" stroke-width="1.4"/><rect x="1.7" y="1.7" width="25.3" height="25.0" rx="2" fill="none" stroke="#c4c4c4" stroke-width="0.6" opacity="0.8"/><path d="M6 16.4 l2.4 4.4 l2 -3 l2.4 4.6 l2.6 -4.6 l2.4 2.8 l1.6 -5 l-7 -3z" fill="#d8222a" stroke="#8a1014" stroke-width="0.5"/><path d="M19.6 15 L24.8 19.6 L13.2 25.6 L12 22z" fill="#c6c6c6"/><path d="M3.8 17.2 L7.2 20.6 L9.8 17.6 L12.8 22 L15.6 18.4 L18.4 22.4 L21 18.2 L23.4 20.4 L13.2 25.6 Z" fill="#f6de3a" stroke="#caa41c" stroke-width="0.5"/><path d="M12.60 3.00 L12.60 17.00 M18.66 6.50 L6.54 13.50 M18.66 13.50 L6.54 6.50 " stroke="#9a1014" stroke-width="4.5" stroke-linecap="round"/><path d="M12.60 3.00 L12.60 17.00 M18.66 6.50 L6.54 13.50 M18.66 13.50 L6.54 6.50 " stroke="#e8242a" stroke-width="3.3" stroke-linecap="round"/></g></svg>
<svg style="position:absolute;left:867px;top:510px;overflow:visible" width="33" height="33" viewBox="0 0 33 33" font-family="Liberation Sans, sans-serif"><g transform="translate(0.65,0.30)"><rect x="2" y="2.2" width="28" height="27.8" rx="3" fill="#000" opacity="0.22"/><rect x="0.7" y="0.7" width="27.3" height="27.0" rx="2.6" fill="url(#tg)" stroke="#3c3c3c" stroke-width="1.4"/><rect x="1.7" y="1.7" width="25.3" height="25.0" rx="2" fill="none" stroke="#c4c4c4" stroke-width="0.6" opacity="0.8"/><text x="2.4" y="14.2" font-size="14.0" font-weight="bold" fill="#6ad868" stroke="#2f8a2a" stroke-width="0.5" letter-spacing="0.06">X</text><text x="15.4" y="14.2" font-size="14.0" font-weight="bold" fill="#6ad868" stroke="#2f8a2a" stroke-width="0.5" letter-spacing="0.09">A</text><path d="M6.4 18.6 L10.4 8.8 L13 15.6 L14.8 11.6 L17.4 18 L19.2 13.2 L21.8 18.8 L13 23 Z" fill="#d8222a" stroke="#8a1014" stroke-width="0.6"/><path d="M19.6 15 L24.8 19.6 L13.2 25.6 L12 22z" fill="#c6c6c6"/><path d="M3.8 17.2 L7.2 20.6 L9.8 17.6 L12.8 22 L15.6 18.4 L18.4 22.4 L21 18.2 L23.4 20.4 L13.2 25.6 Z" fill="#f6de3a" stroke="#caa41c" stroke-width="0.5"/></g></svg>
<svg style="position:absolute;left:901px;top:510px;overflow:visible" width="33" height="33" viewBox="0 0 33 33" font-family="Liberation Sans, sans-serif"><g transform="translate(0.30,0.30)"><rect x="2" y="2.2" width="28" height="27.8" rx="3" fill="#000" opacity="0.22"/><rect x="0.7" y="0.7" width="27.3" height="27.0" rx="2.6" fill="url(#tg)" stroke="#3c3c3c" stroke-width="1.4"/><rect x="1.7" y="1.7" width="25.3" height="25.0" rx="2" fill="none" stroke="#c4c4c4" stroke-width="0.6" opacity="0.8"/><path d="M4.4 18.2 L20.4 13.4 L24.6 18.6 L13.4 25.6z" fill="#f4dc3a" stroke="#c8a81a" stroke-width="0.5"/><path d="M20.4 13.4 L24.6 18.6 L13.4 25.6 L16.4 21z" fill="#cfcfcf"/><path d="M3.4 3 l4.4 5 l-4.4 4z" fill="#e87a7a" opacity="0.8"/><g transform="translate(2.4,-1.6) scale(0.84)"><path d="M14.2 24.4 V10.6 M14.2 14.6 Q7.8 17.5 4.6 23 M14.2 14.6 Q20.6 17.5 23.8 23" stroke="#3f8f1c" stroke-width="4.6" fill="none" stroke-linecap="round"/><path d="M14.2 24.4 V10.6 M14.2 14.6 Q7.8 17.5 4.6 23 M14.2 14.6 Q20.6 17.5 23.8 23" stroke="#84dc3c" stroke-width="3.1" fill="none" stroke-linecap="round"/><path d="M14.2 6.6 l-4.8 6.2 h9.6z" fill="#84dc3c" stroke="#3f8f1c" stroke-width="0.8" stroke-linejoin="round"/></g></g></svg>
<svg style="position:absolute;left:934px;top:510px;overflow:visible" width="33" height="33" viewBox="0 0 33 33" font-family="Liberation Sans, sans-serif"><g transform="translate(0.95,0.30)"><rect x="2" y="2.2" width="28" height="27.8" rx="3" fill="#000" opacity="0.22"/><rect x="0.7" y="0.7" width="27.3" height="27.0" rx="2.6" fill="url(#tg)" stroke="#3c3c3c" stroke-width="1.4"/><rect x="1.7" y="1.7" width="25.3" height="25.0" rx="2" fill="none" stroke="#c4c4c4" stroke-width="0.6" opacity="0.8"/><path d="M4.4 18.2 L20.4 13.4 L24.6 18.6 L13.4 25.6z" fill="#f4dc3a" stroke="#c8a81a" stroke-width="0.5"/><path d="M20.4 13.4 L24.6 18.6 L13.4 25.6 L16.4 21z" fill="#cfcfcf"/><path d="M3.4 3 l4.4 5 l-4.4 4z" fill="#e87a7a" opacity="0.8"/><g transform="translate(1.6,-1.6) scale(0.84)"><path d="M18.4 24.4 V15.4 M18.4 16 Q13.6 18.4 11.4 23.2 M18.4 16 Q23 18.4 25.2 23.2" stroke="#3f8f1c" stroke-width="4.2" fill="none" stroke-linecap="round"/><path d="M18.4 24.4 V15.4 M18.4 16 Q13.6 18.4 11.4 23.2 M18.4 16 Q23 18.4 25.2 23.2" stroke="#84dc3c" stroke-width="2.8" fill="none" stroke-linecap="round"/><path d="M5 23 Q8 18.6 12.4 16 Q15.6 13.6 16.2 9.4" stroke="#1a5aa8" stroke-width="5.4" fill="none" stroke-linecap="round"/><path d="M5 23 Q8 18.6 12.4 16 Q15.6 13.6 16.2 9.4" stroke="#3a96ec" stroke-width="3.8" fill="none" stroke-linecap="round"/><path d="M17.4 4.8 l-5.4 5 l7.6 2z" fill="#3a96ec" stroke="#1a5aa8" stroke-width="0.7" stroke-linejoin="round"/></g></g></svg>
<svg style="position:absolute;left:823px;top:551px" width="104.00" height="69.00"><g transform="translate(0.00,0.50)"><defs><clipPath id="gc8"><rect x="3.15" y="3.15" width="94.70" height="59.70" rx="5.0"/></clipPath></defs><rect x="4.15" y="4.15" width="94.70" height="59.70" rx="6.0" fill="#000" opacity="0.10"/><rect x="3.15" y="3.15" width="94.70" height="59.70" rx="5.0" fill="#fff"/><g clip-path="url(#gc8)"><rect x="2" y="2" width="97.00" height="15.40" fill="url(#ghd)"/><rect x="2" y="17.00" width="97.00" height="1.3" fill="#3a3a3a"/></g><rect x="3.15" y="3.15" width="94.70" height="59.70" rx="5.0" fill="none" stroke="#141414" stroke-width="2.30"/></g></svg>
<svg style="position:absolute;left:829.80px;top:556.30px" width="12.00" height="12.00" viewBox="0 0 12 12"><rect x="0.6" y="1" width="9.6" height="9" fill="#f4f4ec" stroke="#5a7aa8" stroke-width="0.8"/><rect x="0.6" y="1" width="9.6" height="2.6" fill="#4a90d8"/><text x="1.4" y="9.4" font-size="6.4" font-weight="bold" fill="#3a5a98" font-family="Liberation Sans">12</text><circle cx="9.4" cy="8.6" r="2.8" fill="#f8e8b0" stroke="#c89a2a" stroke-width="0.7"/></svg>
<div class="t" style="left:844.20px;top:556.82px;font-size:8.90px;line-height:10.68px;letter-spacing:-0.191px;color:#fff;">Date/Time</div>
<svg style="position:absolute;left:834px;top:577px;overflow:visible" width="33" height="33" viewBox="0 0 33 33" font-family="Liberation Sans, sans-serif"><g transform="translate(0.00,0.40)"><rect x="2" y="2.2" width="28" height="27.8" rx="3" fill="#000" opacity="0.22"/><rect x="0.7" y="0.7" width="27.3" height="27.0" rx="2.6" fill="url(#tg)" stroke="#3c3c3c" stroke-width="1.4"/><rect x="1.7" y="1.7" width="25.3" height="25.0" rx="2" fill="none" stroke="#c4c4c4" stroke-width="0.6" opacity="0.8"/><rect x="5" y="4" width="18" height="15" fill="#f4f4ec" stroke="#6a86a8" stroke-width="0.8"/><rect x="5" y="4" width="18" height="3.4" fill="#4a90d8"/><text x="5.6" y="17.0" font-size="9.0" font-weight="bold" fill="#3a6ab8">1</text><text x="18.2" y="17.0" font-size="9.0" font-weight="bold" fill="#3a6ab8">i</text><path d="M18.4 24.4 V15.4 M18.4 16 Q13.6 18.4 11.4 23.2 M18.4 16 Q23 18.4 25.2 23.2" stroke="#3f8f1c" stroke-width="4.2" fill="none" stroke-linecap="round"/><path d="M18.4 24.4 V15.4 M18.4 16 Q13.6 18.4 11.4 23.2 M18.4 16 Q23 18.4 25.2 23.2" stroke="#84dc3c" stroke-width="2.8" fill="none" stroke-linecap="round"/><path d="M5 23 Q8 18.6 12.4 16 Q15.6 13.6 16.2 9.4" stroke="#1a5aa8" stroke-width="5.4" fill="none" stroke-linecap="round"/><path d="M5 23 Q8 18.6 12.4 16 Q15.6 13.6 16.2 9.4" stroke="#3a96ec" stroke-width="3.8" fill="none" stroke-linecap="round"/><path d="M17.4 4.8 l-5.4 5 l7.6 2z" fill="#3a96ec" stroke="#1a5aa8" stroke-width="0.7" stroke-linejoin="round"/></g></svg>
<svg style="position:absolute;left:867px;top:577px;overflow:visible" width="33" height="33" viewBox="0 0 33 33" font-family="Liberation Sans, sans-serif"><g transform="translate(0.65,0.40)"><rect x="2" y="2.2" width="28" height="27.8" rx="3" fill="#000" opacity="0.22"/><rect x="0.7" y="0.7" width="27.3" height="27.0" rx="2.6" fill="url(#tg)" stroke="#3c3c3c" stroke-width="1.4"/><rect x="1.7" y="1.7" width="25.3" height="25.0" rx="2" fill="none" stroke="#c4c4c4" stroke-width="0.6" opacity="0.8"/><rect x="5" y="4" width="18" height="15" fill="#f4f4ec" stroke="#6a86a8" stroke-width="0.8"/><rect x="5" y="4" width="18" height="3.4" fill="#4a90d8"/><text x="5.6" y="17.0" font-size="9.0" font-weight="bold" fill="#3a6ab8">1</text><text x="18.2" y="17.0" font-size="9.0" font-weight="bold" fill="#3a6ab8">i</text><path d="M14.2 24.4 V10.6 M14.2 14.6 Q7.8 17.5 4.6 23 M14.2 14.6 Q20.6 17.5 23.8 23" stroke="#3f8f1c" stroke-width="4.6" fill="none" stroke-linecap="round"/><path d="M14.2 24.4 V10.6 M14.2 14.6 Q7.8 17.5 4.6 23 M14.2 14.6 Q20.6 17.5 23.8 23" stroke="#84dc3c" stroke-width="3.1" fill="none" stroke-linecap="round"/><path d="M14.2 6.6 l-4.8 6.2 h9.6z" fill="#84dc3c" stroke="#3f8f1c" stroke-width="0.8" stroke-linejoin="round"/></g></svg>
<div style="position:absolute;left:820px;top:616px;width:190px;height:102.4px;overflow:hidden"><div style="position:absolute;left:-820px;top:-616px">
<svg style="position:absolute;left:823px;top:618px" width="137.20" height="147.00"><g transform="translate(0.00,0.70)"><defs><clipPath id="gc9"><rect x="3.15" y="3.15" width="127.90" height="137.70" rx="5.0"/></clipPath></defs><rect x="4.15" y="4.15" width="127.90" height="137.70" rx="6.0" fill="#000" opacity="0.10"/><rect x="3.15" y="3.15" width="127.90" height="137.70" rx="5.0" fill="#fff"/><g clip-path="url(#gc9)"><rect x="2" y="2" width="130.20" height="15.40" fill="url(#ghd)"/><rect x="2" y="17.00" width="130.20" height="1.3" fill="#3a3a3a"/></g><rect x="3.15" y="3.15" width="127.90" height="137.70" rx="5.0" fill="none" stroke="#141414" stroke-width="2.30"/></g></svg>
<svg style="position:absolute;left:829.80px;top:623.50px" width="12.00" height="12.00" viewBox="0 0 12 12"><rect x="1" y="0.6" width="8.4" height="10.6" fill="#f8f8f8" stroke="#9aa8b8" stroke-width="0.7"/><path d="M2.4 3 h5.6 M2.4 5 h5.6 M2.4 7 h3.6" stroke="#8a98a8" stroke-width="0.8"/><path d="M6 7.4 h5.4 l-2 2.2 v2 l-1.4 -0.8 v-1.2z" fill="#e8ecf0" stroke="#6a7a8a" stroke-width="0.6"/></svg>
<div class="t" style="left:844.20px;top:624.02px;font-size:8.90px;line-height:10.68px;letter-spacing:-0.061px;color:#fff;">Filters</div>
<svg style="position:absolute;left:831px;top:643px" width="104.00" height="68.40"><g transform="translate(0.20,0.00)"><defs><clipPath id="gc10"><rect x="3.15" y="3.15" width="94.70" height="59.10" rx="5.0"/></clipPath></defs><rect x="4.15" y="4.15" width="94.70" height="59.10" rx="6.0" fill="#000" opacity="0.10"/><rect x="3.15" y="3.15" width="94.70" height="59.10" rx="5.0" fill="#fff"/><g clip-path="url(#gc10)"><rect x="2" y="2" width="97.00" height="15.40" fill="url(#ghd)"/><rect x="2" y="17.00" width="97.00" height="1.3" fill="#3a3a3a"/></g><rect x="3.15" y="3.15" width="94.70" height="59.10" rx="5.0" fill="none" stroke="#141414" stroke-width="2.30"/></g></svg>
<svg style="position:absolute;left:838.00px;top:647.80px" width="12.00" height="12.00" viewBox="0 0 12 12"><path d="M1 6 l4 -3 h5 l-4 3z M1 6 l5 4 l4 -7" fill="#d8ecf8" stroke="#8ab0cc" stroke-width="0.7"/><path d="M6 10 l5.4 -6" stroke="#e8f4fc" stroke-width="1"/></svg>
<div class="t" style="left:852.40px;top:648.32px;font-size:8.90px;line-height:10.68px;letter-spacing:-0.471px;color:#fff;">Math</div>
<svg style="position:absolute;left:842px;top:669px;overflow:visible" width="33" height="33" viewBox="0 0 33 33" font-family="Liberation Sans, sans-serif"><g transform="translate(0.20,0.00)"><rect x="2" y="2.2" width="28" height="27.8" rx="3" fill="#000" opacity="0.22"/><rect x="0.7" y="0.7" width="27.3" height="27.0" rx="2.6" fill="url(#tg)" stroke="#3c3c3c" stroke-width="1.4"/><rect x="1.7" y="1.7" width="25.3" height="25.0" rx="2" fill="none" stroke="#c4c4c4" stroke-width="0.6" opacity="0.8"/><text x="2.4" y="14.2" font-size="14.0" font-weight="bold" fill="#6ad868" stroke="#2f8a2a" stroke-width="0.5" letter-spacing="0.06">X</text><text x="15.4" y="14.2" font-size="14.0" font-weight="bold" fill="#6ad868" stroke="#2f8a2a" stroke-width="0.5" letter-spacing="0.09">A</text><path d="M6.4 18.6 L10.4 8.8 L13 15.6 L14.8 11.6 L17.4 18 L19.2 13.2 L21.8 18.8 L13 23 Z" fill="#d8222a" stroke="#8a1014" stroke-width="0.6"/><path d="M19.6 15 L24.8 19.6 L13.2 25.6 L12 22z" fill="#c6c6c6"/><path d="M3.8 17.2 L7.2 20.6 L9.8 17.6 L12.8 22 L15.6 18.4 L18.4 22.4 L21 18.2 L23.4 20.4 L13.2 25.6 Z" fill="#f6de3a" stroke="#caa41c" stroke-width="0.5"/></g></svg>
<svg style="position:absolute;left:876px;top:669px;overflow:visible" width="33" height="33" viewBox="0 0 33 33" font-family="Liberation Sans, sans-serif"><g transform="translate(0.20,0.00)"><rect x="2" y="2.2" width="28" height="27.8" rx="3" fill="#000" opacity="0.22"/><rect x="0.7" y="0.7" width="27.3" height="27.0" rx="2.6" fill="url(#tg)" stroke="#3c3c3c" stroke-width="1.4"/><rect x="1.7" y="1.7" width="25.3" height="25.0" rx="2" fill="none" stroke="#c4c4c4" stroke-width="0.6" opacity="0.8"/><path d="M6 16.4 l2.4 4.4 l2 -3 l2.4 4.6 l2.6 -4.6 l2.4 2.8 l1.6 -5 l-7 -3z" fill="#d8222a" stroke="#8a1014" stroke-width="0.5"/><path d="M19.6 15 L24.8 19.6 L13.2 25.6 L12 22z" fill="#c6c6c6"/><path d="M3.8 17.2 L7.2 20.6 L9.8 17.6 L12.8 22 L15.6 18.4 L18.4 22.4 L21 18.2 L23.4 20.4 L13.2 25.6 Z" fill="#f6de3a" stroke="#caa41c" stroke-width="0.5"/><path d="M12.60 3.00 L12.60 17.00 M18.66 6.50 L6.54 13.50 M18.66 13.50 L6.54 6.50 " stroke="#9a1014" stroke-width="4.5" stroke-linecap="round"/><path d="M12.60 3.00 L12.60 17.00 M18.66 6.50 L6.54 13.50 M18.66 13.50 L6.54 6.50 " stroke="#e8242a" stroke-width="3.3" stroke-linecap="round"/></g></svg>
<svg style="position:absolute;left:831px;top:710px" width="104.00" height="47.00"><g transform="translate(0.20,0.00)"><defs><clipPath id="gc11"><rect x="3.15" y="3.15" width="94.70" height="37.70" rx="5.0"/></clipPath></defs><rect x="4.15" y="4.15" width="94.70" height="37.70" rx="6.0" fill="#000" opacity="0.10"/><rect x="3.15" y="3.15" width="94.70" height="37.70" rx="5.0" fill="#fff"/><g clip-path="url(#gc11)"><rect x="2" y="2" width="97.00" height="15.40" fill="url(#ghd)"/><rect x="2" y="17.00" width="97.00" height="1.3" fill="#3a3a3a"/></g><rect x="3.15" y="3.15" width="94.70" height="37.70" rx="5.0" fill="none" stroke="#141414" stroke-width="2.30"/></g></svg>
<svg style="position:absolute;left:838.00px;top:714.80px" width="12.00" height="12.00" viewBox="0 0 12 12"><path d="M1 6 l4 -3 h5 l-4 3z M1 6 l5 4 l4 -7" fill="#d8ecf8" stroke="#8ab0cc" stroke-width="0.7"/><path d="M6 10 l5.4 -6" stroke="#e8f4fc" stroke-width="1"/></svg>
<div class="t" style="left:852.40px;top:715.32px;font-size:8.90px;line-height:10.68px;letter-spacing:-0.471px;color:#fff;">Math</div>
</div></div>
<div style="position:absolute;left:1008.00px;top:78.50px;width:15.00px;height:640.00px;background:#f2f2f2"></div>
<div style="position:absolute;left:1011.10px;top:91.80px;width:11.40px;height:464.00px;background:#cdcdcd"></div>
<svg style="position:absolute;left:1012.60px;top:83.40px" width="8.00" height="5.00" viewBox="0 0 8 5"><path d="M0.8 4.2 l3.2 -3.2 l3.2 3.2" stroke="#3a3a3a" stroke-width="1.3" fill="none"/></svg>
<svg style="position:absolute;left:1012.60px;top:709.60px" width="8.00" height="5.00" viewBox="0 0 8 5"><path d="M0.8 0.8 l3.2 3.2 l3.2 -3.2" stroke="#3a3a3a" stroke-width="1.3" fill="none"/></svg>
<div style="position:absolute;left:1023.00px;top:23.30px;width:1.00px;height:716.00px;background:#8496a0"></div>
<div style="position:absolute;left:205.00px;top:700.80px;width:617.00px;height:16.20px;background:#f0f0f0"></div>
<div style="position:absolute;left:205.00px;top:700.60px;width:601.00px;height:1.00px;background:#dcdcdc"></div>
<div style="position:absolute;left:261.40px;top:703.00px;width:1.00px;height:12.00px;background:#d8d8d8"></div>
<div class="t" style="left:210.00px;top:703.68px;font-size:8.80px;line-height:10.56px;letter-spacing:-0.275px;color:#111;">561:1279</div>
<div class="t" style="left:264.80px;top:703.68px;font-size:8.80px;line-height:10.56px;letter-spacing:0.003px;color:#111;">SineIntegerGenerator1.__OpenWireRootUnit__.SineIntegerGenerator1.ClockInputPin 560:1280</div>
<div style="position:absolute;left:0.00px;top:716.80px;width:820.00px;height:20.40px;background:#fbefe6"></div>
<div style="position:absolute;left:0.00px;top:716.80px;width:206.00px;height:20.40px;background:#f0f0f0"></div>
<div style="position:absolute;left:0.00px;top:737.20px;width:1024.00px;height:1.80px;background:#78a5cf"></div>
<div class="t" style="left:211.50px;top:720.78px;font-size:8.80px;line-height:10.56px;letter-spacing:-0.117px;color:#111;">Port:</div>
<div style="position:absolute;left:232.00px;top:717.80px;width:48.00px;height:16.60px;background:#e3e3e3;border:1px solid #b4b4b4;box-sizing:border-box"></div>
<div class="t" style="left:235.00px;top:720.98px;font-size:8.80px;line-height:10.56px;letter-spacing:-0.527px;color:#111;">COM5 (L</div>
<svg style="position:absolute;left:271.50px;top:724.00px" width="7.00" height="4.00" viewBox="0 0 7 4"><path d="M0.5 0.5 l3 3 l3 -3" stroke="#444" stroke-width="0.9" fill="none"/></svg>
<div class="t" style="left:285.00px;top:720.78px;font-size:8.80px;line-height:10.56px;letter-spacing:-0.232px;color:#111;">Speed:</div>
<div style="position:absolute;left:313.60px;top:717.80px;width:44.00px;height:16.60px;background:#fff;border:1px solid #8c8c8c;box-sizing:border-box"></div>
<div class="t" style="left:316.20px;top:720.98px;font-size:8.80px;line-height:10.56px;letter-spacing:-0.019px;color:#111;">9600</div>
<svg style="position:absolute;left:347.50px;top:724.00px" width="7.00" height="4.00" viewBox="0 0 7 4"><path d="M0.5 0.5 l3 3 l3 -3" stroke="#444" stroke-width="0.9" fill="none"/></svg>
<div class="t" style="left:362.00px;top:720.78px;font-size:8.80px;line-height:10.56px;letter-spacing:-0.116px;color:#111;">Format:</div>
<div style="position:absolute;left:362.00px;top:729.60px;width:4.50px;height:0.80px;background:#333"></div>
<div style="position:absolute;left:393.30px;top:717.80px;width:110.00px;height:16.60px;background:#e3e3e3;border:1px solid #b4b4b4;box-sizing:border-box"></div>
<div class="t" style="left:396.00px;top:720.98px;font-size:8.80px;line-height:10.56px;letter-spacing:-0.021px;color:#111;">Unformatted Text</div>
<svg style="position:absolute;left:493.00px;top:724.00px" width="7.00" height="4.00" viewBox="0 0 7 4"><path d="M0.5 0.5 l3 3 l3 -3" stroke="#444" stroke-width="0.9" fill="none"/></svg>
<div style="position:absolute;left:508.00px;top:721.00px;width:10.40px;height:10.40px;background:#fff;border:1px solid #333;box-sizing:border-box"></div><svg style="position:absolute;left:509.60px;top:722.70px" width="8.00" height="7.00" viewBox="0 0 8 7"><path d="M0.6 3.4 l2.2 2.2 l4 -4.6" stroke="#222" stroke-width="1.1" fill="none"/></svg>
<div class="t" style="left:520.00px;top:720.88px;font-size:8.80px;line-height:10.56px;letter-spacing:-0.197px;color:#111;">Reset</div>
<div style="position:absolute;left:547.60px;top:721.00px;width:10.40px;height:10.40px;background:#fff;border:1px solid #333;box-sizing:border-box"></div><svg style="position:absolute;left:549.20px;top:722.70px" width="8.00" height="7.00" viewBox="0 0 8 7"><path d="M0.6 3.4 l2.2 2.2 l4 -4.6" stroke="#222" stroke-width="1.1" fill="none"/></svg>
<div class="t" style="left:559.20px;top:720.88px;font-size:8.80px;line-height:10.56px;letter-spacing:-0.560px;color:#111;">Log</div>
<div style="position:absolute;left:575.00px;top:717.80px;width:20.50px;height:17.00px;background:#d6e6f6;border:1px solid #9ec4ea;box-sizing:border-box"></div>
<svg style="position:absolute;left:578.50px;top:720.00px" width="13.00" height="13.00" viewBox="0 0 13 13"><path d="M2 1 v10 h9" stroke="#3f7fc4" stroke-width="1" fill="none"/><rect x="3.5" y="2" width="7" height="7.4" fill="#fff" stroke="#6a9fd6" stroke-width="0.8"/><path d="M4.4 4.2 h5 M4.4 6 h5 M4.4 7.8 h5" stroke="#8ab4de" stroke-width="0.7"/></svg>
<div style="position:absolute;left:600.00px;top:717.80px;width:66.00px;height:17.00px;background:#e1e1e1;border:1px solid #adadad;box-sizing:border-box"></div>
<svg style="position:absolute;left:609.50px;top:720.50px" width="11.00" height="11.00" viewBox="0 0 11 11"><path d="M1 8.5 L7.5 2 L10 4.5 L3.5 11z" fill="#f0b62a" stroke="#a8761a" stroke-width="0.7"/><path d="M0.8 3.5 l3 -2.5 l0.5 3.2z" fill="#e8d040"/></svg>
<div class="t" style="left:624.60px;top:720.98px;font-size:8.80px;line-height:10.56px;letter-spacing:-0.182px;color:#111;">Connect</div>
<svg style="position:absolute;left:787.00px;top:719.20px" width="13.00" height="13.00" viewBox="0 0 13 13"><path d="M0.8 0.8 L6.2 6.2" stroke="#6a6a72" stroke-width="1.1"/><path d="M6.4 6.4 L11.4 11.2" stroke="#d8344a" stroke-width="3.2" stroke-linecap="round"/><path d="M7.6 6.6 L11.6 10.4" stroke="#fff" stroke-width="0.9" stroke-dasharray="1 1.1" opacity="0.8"/><circle cx="10.2" cy="2.4" r="2.1" fill="none" stroke="#a4acb6" stroke-width="1.5"/><path d="M10.4 0 v2.4" stroke="#fbefe6" stroke-width="1.3"/><path d="M8.8 3.8 L6.2 6.4" stroke="#a4acb6" stroke-width="1.8"/><path d="M6.4 6.2 L1.8 11" stroke="#1f62b8" stroke-width="3.2" stroke-linecap="round"/></svg>
<svg style="position:absolute;left:804.00px;top:719.50px" width="12.50" height="12.00" viewBox="0 0 12.5 12"><rect x="0" y="0" width="12.5" height="12" rx="1" fill="#d8343c"/><circle cx="6.2" cy="6.2" r="3.6" fill="none" stroke="#fff" stroke-width="1.3"/><path d="M6.2 3.8 v3.4" stroke="#fff" stroke-width="1.2"/></svg>
<div style="position:absolute;left:820.00px;top:718.50px;width:204.00px;height:18.70px;background:#fbefe6"></div>
<svg style="position:absolute;left:990.40px;top:721.40px" width="12.40" height="12.40" viewBox="0 0 13 13"><path d="M0.8 0.8 L6.2 6.2" stroke="#6a6a72" stroke-width="1.1"/><path d="M6.4 6.4 L11.4 11.2" stroke="#d8344a" stroke-width="3.2" stroke-linecap="round"/><path d="M7.6 6.6 L11.6 10.4" stroke="#fff" stroke-width="0.9" stroke-dasharray="1 1.1" opacity="0.8"/><circle cx="10.2" cy="2.4" r="2.1" fill="none" stroke="#a4acb6" stroke-width="1.5"/><path d="M10.4 0 v2.4" stroke="#fbefe6" stroke-width="1.3"/><path d="M8.8 3.8 L6.2 6.4" stroke="#a4acb6" stroke-width="1.8"/><path d="M6.4 6.2 L1.8 11" stroke="#1f62b8" stroke-width="3.2" stroke-linecap="round"/></svg>
<svg style="position:absolute;left:1008.20px;top:722.40px" width="11.5" height="11.2" viewBox="0 0 12.5 12"><rect x="0" y="0" width="12.5" height="12" rx="1" fill="#d8343c"/><circle cx="6.2" cy="6.2" r="3.6" fill="none" stroke="#fff" stroke-width="1.3"/><path d="M6.2 3.8 v3.4" stroke="#fff" stroke-width="1.2"/></svg>
<div class="t" style="left:892.00px;top:724.28px;font-size:8.80px;line-height:10.56px;letter-spacing:-0.637px;color:#222;">Arduino EEPROM</div>
<div class="t" style="left:892.6px;top:722.0px;font-family:'Liberation Mono',monospace;font-weight:bold;font-size:11.6px;line-height:14px;letter-spacing:0.02px;-webkit-text-stroke:0;color:#161616">www.mfgrobots.com</div>
</body></html>
